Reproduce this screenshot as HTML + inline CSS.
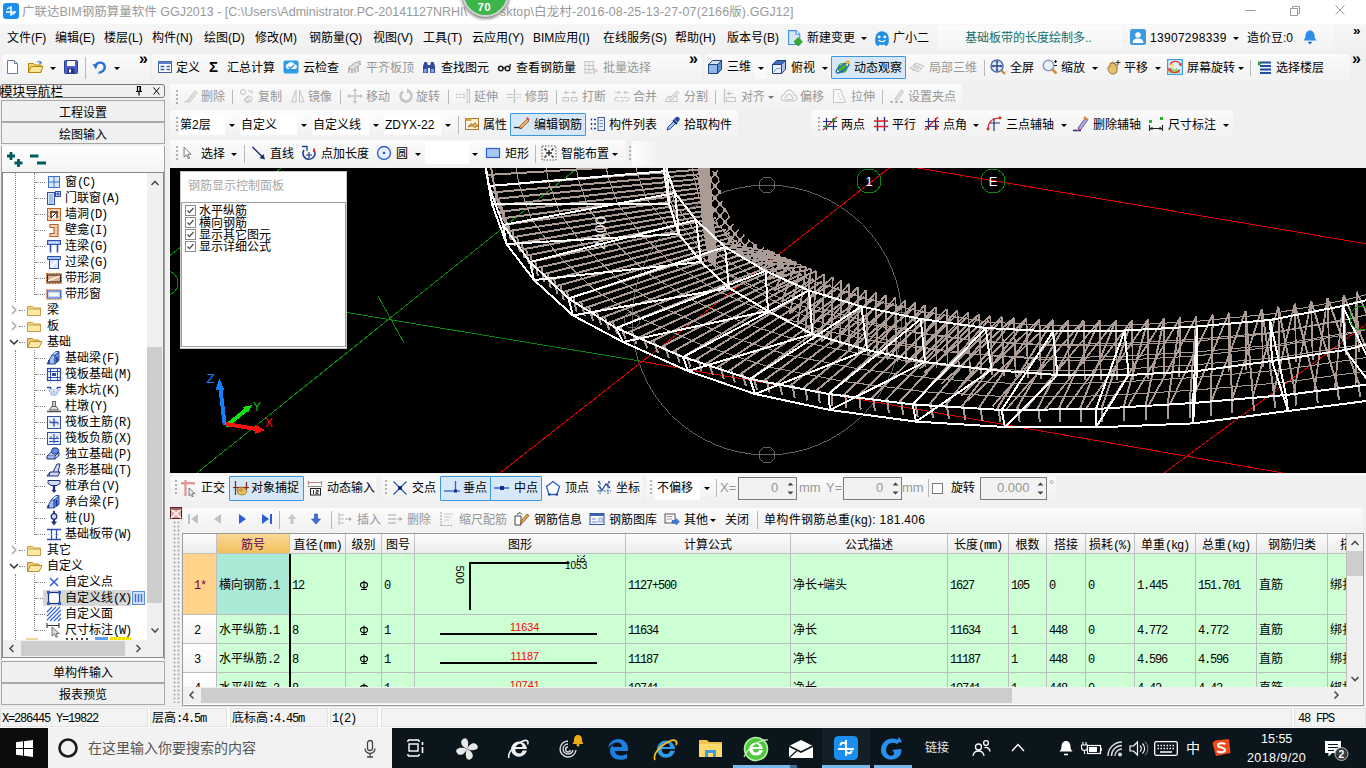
<!DOCTYPE html>
<html lang="zh-CN"><head><meta charset="utf-8"><title>GGJ2013</title>
<style>

html,body{margin:0;padding:0}
body{width:1366px;height:768px;position:relative;overflow:hidden;background:#f0f0f0;
 font-family:"Liberation Sans","Noto Sans CJK SC",sans-serif;font-size:12px;color:#000}
.t{position:absolute;white-space:nowrap;font-size:12px}
.g{color:#979797}
.ss{font-family:"Liberation Mono","Noto Sans CJK SC",monospace;font-size:12px}
.ss b{font-weight:normal;font-family:"Liberation Mono",monospace;letter-spacing:-1.2px}
.i{position:absolute;overflow:visible}
.dd{position:absolute;width:0;height:0;border-left:3px solid transparent;border-right:3px solid transparent;border-top:3px solid #000}
.sep{position:absolute;width:1px;background:#b8b8b8}
.grip{position:absolute;width:2px;background-image:linear-gradient(#b2b2b2 50%,transparent 50%);background-size:2px 4px}
.tb{position:absolute;border-radius:3px;background:linear-gradient(#fbfbfb,#f1f1f1)}
.act{position:absolute;border:1px solid #3c96e0;background:#d6e8f8;box-sizing:border-box;border-radius:1px}
.btn{position:absolute;box-sizing:border-box;border:1px solid #a8a8a8;background:#f0f0f0;text-align:center;font-size:12px}
.cb{position:absolute;background:#fff}

.ttl{color:#999;font-size:12.5px}

</style></head>
<body>
<div class="" style="position:absolute;left:0px;top:0px;width:1366px;height:24px;background:#fff"></div>
<svg class="i" style="left:3px;top:3px" width="16" height="16" viewBox="0 0 16 16"><rect width="16" height="16" rx="3" fill="#1b8ff0"/><path d="M8 3v10M4.500 6.500c0-2 2.500-2 3.500-.500M11.500 9.500c0 2-2.500 2-3.500 .500M3 9h10" fill="none" stroke="#fff" stroke-width="1.300"/></svg>
<span class="t ttl" style="left:22px;top:3px;line-height:18px;">广联达BIM钢筋算量软件 GGJ2013 - [C:\Users\Administrator.PC-20141127NRHI\</span>
<span class="t ttl" style="left:500px;top:3px;line-height:18px;letter-spacing:.120px">sktop\白龙村-2016-08-25-13-27-07(2166版).GGJ12]</span>
<svg class="i" style="left:1240px;top:0" width="126" height="24" viewBox="0 0 126 24"><path d="M5.500 10.500h10" stroke="#999" /><path d="M50.500 8.500h7v7h-7zM52.500 8.500v-2h7v7h-2" fill="none" stroke="#999"/><path d="M95.500 5.500l9 9M104.500 5.500l-9 9" stroke="#999" stroke-width="1"/></svg>
<div style="position:absolute;left:462px;top:-30px;width:47px;height:47px;border-radius:50%;background:#3cb54a;border:2px solid #d4d4d4;box-sizing:border-box;box-shadow:0 1px 3px 1px rgba(80,80,80,.650)"></div>
<span class="t" style="left:477.5px;top:0.8px;line-height:12px;color:#fff;font-weight:bold;font-size:11.500px;letter-spacing:.400px">70</span>
<div class="" style="position:absolute;left:0px;top:24px;width:1366px;height:28px;background:linear-gradient(#f6f6f6,#f0f0f0)"></div>
<span class="t" style="left:7px;top:30px;line-height:16px;">文件(F)</span>
<span class="t" style="left:55px;top:30px;line-height:16px;">编辑(E)</span>
<span class="t" style="left:104px;top:30px;line-height:16px;">楼层(L)</span>
<span class="t" style="left:152px;top:30px;line-height:16px;">构件(N)</span>
<span class="t" style="left:204px;top:30px;line-height:16px;">绘图(D)</span>
<span class="t" style="left:255px;top:30px;line-height:16px;">修改(M)</span>
<span class="t" style="left:309px;top:30px;line-height:16px;">钢筋量(Q)</span>
<span class="t" style="left:373px;top:30px;line-height:16px;">视图(V)</span>
<span class="t" style="left:423px;top:30px;line-height:16px;">工具(T)</span>
<span class="t" style="left:472px;top:30px;line-height:16px;">云应用(Y)</span>
<span class="t" style="left:533px;top:30px;line-height:16px;">BIM应用(I)</span>
<span class="t" style="left:603px;top:30px;line-height:16px;">在线服务(S)</span>
<span class="t" style="left:675px;top:30px;line-height:16px;">帮助(H)</span>
<span class="t" style="left:727px;top:30px;line-height:16px;">版本号(B)</span>
<svg class="i" style="left:787px;top:29px" width="17" height="17" viewBox="0 0 16 16"><path d="M1.500 1.500h7l3.500 3.500v9.500h-10.500z" fill="#d4e8fa" stroke="#3a8ee0"/><path d="M8.500 1.500v3.500h3.500" fill="#fff" stroke="#3a8ee0"/><path d="M10.500 8l4 4-4 4-4-4z" fill="#30b030" stroke="#1f801f" stroke-width=".6"/></svg>
<span class="t" style="left:807px;top:30px;line-height:16px;">新建变更</span>
<span class="dd" style="left:861px;top:37px;border-top-color:#000"></span>
<svg class="i" style="left:873px;top:29px" width="18" height="18" viewBox="0 0 16 16"><path d="M2 8a6 6 0 0 1 12 0v3c0 3-2 4-3 4l-1-1.500-2 1-2-1-1 1.500c-1 0-3-1-3-4z" fill="#1e90e8"/><circle cx="5.500" cy="7" r="1.300" fill="#fff"/><circle cx="10.500" cy="7" r="1.300" fill="#fff"/><path d="M5 10q3 2.500 6 0" stroke="#fff" fill="none" stroke-width="1.200"/></svg>
<span class="t" style="left:893px;top:30px;line-height:16px;">广小二</span>
<div class="" style="position:absolute;left:937px;top:25px;width:186px;height:26px;background:linear-gradient(#fcfcfc,#f4f4f4);border-radius:3px"></div>
<span class="t" style="left:965px;top:30px;line-height:16px;color:#10706c">基础板带的长度绘制多..</span>
<div class="" style="position:absolute;left:1124px;top:25px;width:210px;height:26px;background:linear-gradient(#fafafa,#f2f2f2);border-radius:3px"></div>
<svg class="i" style="left:1130px;top:29px" width="16" height="16" viewBox="0 0 16 16"><rect x="0" y="0" width="16" height="16" rx="2.500" fill="#3b9ae0"/><circle cx="8" cy="6" r="2.800" fill="#fff"/><path d="M2.500 14c.500-4 3-4.500 5.500-4.500s5 .500 5.500 4.500z" fill="#fff"/></svg>
<span class="t" style="left:1150px;top:30px;line-height:16px;letter-spacing:.300px">13907298339</span>
<span class="dd" style="left:1233px;top:37px;border-top-color:#000"></span>
<span class="t" style="left:1247px;top:30px;line-height:16px;">造价豆:0</span>
<svg class="i" style="left:1302px;top:29px" width="16" height="16" viewBox="0 0 16 16"><path d="M8 1.500c3 0 4.500 2.500 4.500 5.500 0 2.500 1.500 3.500 2 4.500H1.500c.500-1 2-2 2-4.500 0-3 1.500-5.500 4.500-5.500z" fill="#2f8be8"/><path d="M5.500 12.800h5l-2.500 2.700z" fill="#1f6fc8"/></svg>
<span class="t" style="left:1353px;top:24.5px;line-height:12px;font-size:13.500px;font-weight:bold">»</span>
<div class="tb" style="position:absolute;left:2px;top:54px;width:148px;height:28px;"></div>
<svg class="i" style="left:5px;top:59px" width="16" height="16" viewBox="0 0 16 16"><path d="M2.5 1.5h7l3 3v10h-10z" fill="#fff" stroke="#6b7a99"/><path d="M9.5 1.5v3h3" fill="#dfe6f5" stroke="#6b7a99"/></svg>
<svg class="i" style="left:27px;top:59px" width="16" height="16" viewBox="0 0 16 16"><path d="M1.5 4.5h5l1.5 1.5h6v7.5h-12.5z" fill="#f5d376" stroke="#b8860b"/><path d="M1.5 13.5l2.5-6h12l-2.5 6z" fill="#fbe59a" stroke="#b8860b"/><path d="M10 3.5c2-2 4-1 4.5 .5" fill="none" stroke="#3a6fc4"/><path d="M13 2l2 2.5-3 .3z" fill="#3a6fc4"/></svg>
<span class="dd" style="left:50px;top:67px;border-top-color:#000"></span>
<svg class="i" style="left:63px;top:59px" width="16" height="16" viewBox="0 0 16 16"><rect x="1.5" y="1.5" width="13" height="13" rx="1" fill="#4a63c8" stroke="#2a3f96"/><rect x="4" y="2" width="8" height="5" fill="#fff"/><rect x="4.5" y="9.5" width="7" height="5" fill="#26347a"/><rect x="6" y="10.5" width="2" height="3" fill="#fff"/></svg>
<span class="sep" style="left:85px;top:57px;height:22px"></span>
<svg class="i" style="left:92px;top:59px" width="16" height="16" viewBox="0 0 16 16"><path d="M3 8c1-5 8-6 9.5-1.5S9 14 6.5 13.5" fill="none" stroke="#2f6fd6" stroke-width="2.4"/><path d="M0.5 5l5.5 .2-2.2 5z" fill="#2f6fd6"/></svg>
<span class="dd" style="left:114px;top:67px;border-top-color:#000"></span>
<span class="t" style="left:139px;top:53px;line-height:12px;font-size:16px;font-weight:bold">»</span>
<div class="tb" style="position:absolute;left:152px;top:54px;width:550px;height:28px;"></div>
<svg class="i" style="left:157px;top:59px" width="16" height="16" viewBox="0 0 16 16"><rect x="1.5" y="2.5" width="13" height="11" fill="#fff" stroke="#3f5f9f"/><rect x="1.5" y="2.5" width="13" height="2.5" fill="#5b7fc7"/><path d="M3.5 7.5h4M3.5 10.5h4M9.5 7.5h3.5M9.5 10.5h3.5" stroke="#3f5f9f" stroke-width="1.4"/></svg>
<span class="t" style="left:176px;top:60px;line-height:16px;">定义</span>
<span class="t" style="left:209px;top:58.5px;line-height:16px;font-size:15px;font-weight:bold">Σ</span>
<span class="t" style="left:227px;top:60px;line-height:16px;">汇总计算</span>
<svg class="i" style="left:283px;top:59px" width="16" height="16" viewBox="0 0 16 16"><rect x="0.5" y="1.5" width="15" height="13" rx="2" fill="#2b9be8"/><path d="M4 9.5a2.5 2.5 0 0 1 1-4.6 3.4 3.4 0 0 1 6.4.6A2.2 2.2 0 0 1 12 10H4.8z" fill="#fff"/><path d="M5.5 7.5l2 2 3.5-3.5" fill="none" stroke="#2b9be8" stroke-width="1.4"/></svg>
<span class="t" style="left:303px;top:60px;line-height:16px;">云检查</span>
<svg class="i" style="left:347px;top:59px" width="16" height="16" viewBox="0 0 16 16"><path d="M1 9l8-6 5 2-8 6z" fill="#ddd" stroke="#aaa"/><path d="M2 10v4M5 11v3.5M8 10v4M11 8v5" stroke="#aaa" stroke-width="1.5"/><path d="M11 2l3 1" stroke="#999"/></svg>
<span class="t g" style="left:366px;top:60px;line-height:16px;">平齐板顶</span>
<svg class="i" style="left:421px;top:59px" width="16" height="16" viewBox="0 0 16 16"><path d="M2 14V7l1.5-4h2.5l1 4v7zM9 14V7l1-4h2.5L14 7v7z" fill="#2d4b9a"/><rect x="6.5" y="6" width="3" height="3" fill="#2d4b9a"/><rect x="2.8" y="10" width="3" height="3.5" fill="#7fa2e8"/><rect x="10" y="10" width="3" height="3.5" fill="#7fa2e8"/></svg>
<span class="t" style="left:441px;top:60px;line-height:16px;">查找图元</span>
<svg class="i" style="left:497px;top:59px" width="16" height="16" viewBox="0 0 16 16"><circle cx="3.8" cy="9.5" r="2.3" fill="none" stroke="#222" stroke-width="1.5"/><circle cx="10.5" cy="9.5" r="2.3" fill="none" stroke="#222" stroke-width="1.5"/><path d="M6 9h2.3M12.5 8.5l1-3.5" stroke="#222" stroke-width="1.3" fill="none"/></svg>
<span class="t" style="left:516px;top:60px;line-height:16px;">查看钢筋量</span>
<svg class="i" style="left:583px;top:59px" width="16" height="16" viewBox="0 0 16 16"><path d="M1.5 2.5h10M1.5 6.5h10M1.5 10.5h10M1.5 14h8M2 2v12M6 2v12M10 2v9" stroke="#c4c4c4" fill="none"/><path d="M10 9l5 3-3 .5-1 2.5z" fill="#ddd" stroke="#bbb" stroke-width=".6"/></svg>
<span class="t g" style="left:603px;top:60px;line-height:16px;">批量选择</span>
<span class="t" style="left:689px;top:53px;line-height:12px;font-size:16px;font-weight:bold">»</span>
<div class="tb" style="position:absolute;left:705px;top:54px;width:645px;height:28px;"></div>
<svg class="i" style="left:707px;top:59px" width="16" height="16" viewBox="0 0 16 16"><path d="M1.5 5.5h9v9h-9z" fill="#8fb8e8" stroke="#1f3f7f"/><path d="M1.5 5.5l4-4h9l-4 4z" fill="#cfe2f8" stroke="#1f3f7f"/><path d="M10.5 5.5l4-4v9l-4 4z" fill="#5e8fd0" stroke="#1f3f7f"/></svg>
<span class="t" style="left:727px;top:59px;line-height:16px;">三维</span>
<div class="" style="position:absolute;left:755px;top:57px;width:11px;height:22px;background:#fafafa"></div>
<span class="dd" style="left:758px;top:67px;border-top-color:#000"></span>
<svg class="i" style="left:771px;top:59px" width="16" height="16" viewBox="0 0 16 16"><path d="M1.5 5.5h9v9h-9z" fill="#e8f0fb" stroke="#1f3f7f"/><path d="M1.5 5.5l4-4h9l-4 4z" fill="#3f6fc0" stroke="#1f3f7f"/><path d="M10.5 5.5l4-4v9l-4 4z" fill="#a9c4ea" stroke="#1f3f7f"/><path d="M3 13l2.5-3.5h4" stroke="#7f9fd0" fill="none"/></svg>
<span class="t" style="left:791px;top:60px;line-height:16px;">俯视</span>
<span class="dd" style="left:822px;top:67px;border-top-color:#000"></span>
<div class="act" style="position:absolute;left:831px;top:56px;width:75px;height:23px;"></div>
<svg class="i" style="left:835px;top:59px" width="16" height="16" viewBox="0 0 16 16"><circle cx="7.5" cy="9" r="5" fill="#3fae3a"/><path d="M5 7.5a3 3 0 0 1 3-2" stroke="#bff0b0" fill="none" stroke-width="1.3"/><ellipse cx="7.5" cy="9" rx="7.5" ry="2.6" transform="rotate(-35 7.5 9)" fill="none" stroke="#2a5fb8" stroke-width="1.3"/><circle cx="13" cy="3" r="2" fill="#f0c020"/></svg>
<span class="t" style="left:854px;top:60px;line-height:16px;">动态观察</span>
<svg class="i" style="left:909px;top:59px" width="16" height="16" viewBox="0 0 16 16"><path d="M1 9l6-5 8 3-6 6z" fill="#eee" stroke="#c4c4c4"/><path d="M4 6.5l8 3M7 4l-3 8M10.5 5.5l-4 6" stroke="#c4c4c4" fill="none"/></svg>
<span class="t g" style="left:929px;top:60px;line-height:16px;">局部三维</span>
<span class="sep" style="left:984px;top:60px;height:16px"></span>
<svg class="i" style="left:990px;top:59px" width="16" height="16" viewBox="0 0 16 16"><circle cx="7" cy="7" r="6" fill="#e6eefc" stroke="#4a68a8" stroke-width="1.4"/><path d="M7 2.5v9M2.5 7h9" stroke="#1f3f8f" stroke-width="1.3"/><path d="M7 1.5l-1.6 2h3.2zM7 12.5l-1.6-2h3.2zM1.5 7l2-1.6v3.2zM12.5 7l-2-1.6v3.2z" fill="#1f3f8f"/><path d="M11.5 11.5l3.5 3.5" stroke="#d08020" stroke-width="2.2"/></svg>
<span class="t" style="left:1010px;top:60px;line-height:16px;">全屏</span>
<svg class="i" style="left:1042px;top:59px" width="16" height="16" viewBox="0 0 16 16"><circle cx="6.5" cy="6.5" r="5.2" fill="#eaf2fd" stroke="#8a9ab8" stroke-width="1.5"/><path d="M10.5 10.5l4 4" stroke="#d09030" stroke-width="2.6"/><path d="M12 2.5h3M13.5 1v3M12 6.5h3" stroke="#222" stroke-width="1.2"/></svg>
<span class="t" style="left:1061px;top:60px;line-height:16px;">缩放</span>
<span class="dd" style="left:1092px;top:67px;border-top-color:#000"></span>
<svg class="i" style="left:1105px;top:59px" width="16" height="16" viewBox="0 0 16 16"><path d="M3 9c0-2 1.5-2 2-1V5c0-1.3 1.8-1.3 1.8 0v-1c0-1.3 1.8-1.3 1.8 0v1c0-1.2 1.8-1.2 1.8 0v1.500c0-1 1.700-1 1.700 0V11c0 3-2 4-4.500 4S3 12.500 3 9z" fill="#e8c070" stroke="#8a6a20" stroke-width=".9"/><path d="M13 1v5M10.5 3.500h5" stroke="#333" stroke-width="1"/></svg>
<span class="t" style="left:1124px;top:60px;line-height:16px;">平移</span>
<span class="dd" style="left:1155px;top:67px;border-top-color:#000"></span>
<svg class="i" style="left:1167px;top:59px" width="16" height="16" viewBox="0 0 16 16"><rect x=".600" y=".600" width="14.800" height="14.800" fill="#e4f2fc" stroke="#3aa0e8" stroke-width="1.200"/><path d="M2 12l3-3.500 2.500 2.500 2-2 4 4v1H2z" fill="#8fd070"/><rect x="3" y="5" width="4" height="3" fill="#f8e080"/><path d="M3 5.500A5.800 5.800 0 0 1 13.500 6M13 10.500A5.800 5.800 0 0 1 2.500 10" fill="none" stroke="#e83828" stroke-width="1.400"/><path d="M15 3.500l-.600 4-3-1.700zM1 12.500l.600-4 3 1.700z" fill="#e83828"/></svg>
<span class="t" style="left:1187px;top:60px;line-height:16px;">屏幕旋转</span>
<span class="dd" style="left:1238px;top:67px;border-top-color:#000"></span>
<span class="sep" style="left:1250px;top:60px;height:16px"></span>
<svg class="i" style="left:1257px;top:59px" width="16" height="16" viewBox="0 0 16 16"><path d="M3 3.500h11M3 7h11M3 10.500h11M3 14h11" stroke="#1f4f9f" stroke-width="1.800"/><path d="M1 2l4 2.500-4 2.500z" fill="#2fa040"/></svg>
<span class="t" style="left:1276px;top:60px;line-height:16px;">选择楼层</span>
<span class="t" style="left:1352px;top:53px;line-height:12px;font-size:16px;font-weight:bold">»</span>
<div class="tb" style="position:absolute;left:170px;top:84px;width:792px;height:25px;"></div>
<span class="grip" style="left:176px;top:90px;height:14px"></span>
<svg class="i" style="left:183px;top:88px" width="16" height="16" viewBox="0 0 16 16"><path d="M5 12l7-9 2 1.500-6.500 9z" fill="#e4e4e4" stroke="#c4c4c4"/><path d="M1 14h5M3 12.500l2.500 1" stroke="#c4c4c4"/></svg>
<span class="t g" style="left:201px;top:89px;line-height:16px;">删除</span>
<svg class="i" style="left:239px;top:88px" width="16" height="16" viewBox="0 0 16 16"><circle cx="4" cy="4" r="2.600" fill="none" stroke="#c4c4c4"/><circle cx="10" cy="11" r="3" fill="none" stroke="#c4c4c4"/><circle cx="8" cy="12" r="2.500" fill="none" stroke="#c4c4c4"/><path d="M9 2l4 3M13 2v3.500" stroke="#c4c4c4" fill="none"/></svg>
<span class="t g" style="left:258px;top:89px;line-height:16px;">复制</span>
<svg class="i" style="left:290px;top:88px" width="16" height="16" viewBox="0 0 16 16"><path d="M6 2v12H1.500zM9.500 2v12H14z" fill="#f4f4f4" stroke="#c4c4c4"/></svg>
<span class="t g" style="left:308px;top:89px;line-height:16px;">镜像</span>
<svg class="i" style="left:347px;top:88px" width="16" height="16" viewBox="0 0 16 16"><path d="M8 1v14M1 8h14" stroke="#c4c4c4" stroke-width="1.300"/><path d="M8 0l-2.200 3h4.400zM8 16l-2.200-3h4.400zM0 8l3-2.200v4.400zM16 8l-3-2.200v4.400z" fill="#c4c4c4"/></svg>
<span class="t g" style="left:366px;top:89px;line-height:16px;">移动</span>
<svg class="i" style="left:398px;top:88px" width="16" height="16" viewBox="0 0 16 16"><path d="M5 3.500A5.500 5.500 0 1 0 11 3.500" fill="none" stroke="#c4c4c4" stroke-width="2.600"/><path d="M9 .500l4 2.500-4 2.500z" fill="#c4c4c4"/></svg>
<span class="t g" style="left:416px;top:89px;line-height:16px;">旋转</span>
<svg class="i" style="left:455px;top:88px" width="16" height="16" viewBox="0 0 16 16"><path d="M1 6.500h7M1 9.500h7" stroke="#c4c4c4" stroke-dasharray="2 1"/><path d="M9 5v6" stroke="#c4c4c4"/><rect x="12" y="1.500" width="2.500" height="13" fill="#f4f4f4" stroke="#c4c4c4"/></svg>
<span class="t g" style="left:474px;top:89px;line-height:16px;">延伸</span>
<svg class="i" style="left:506px;top:88px" width="16" height="16" viewBox="0 0 16 16"><path d="M1 6.500h6M1 9.500h6" stroke="#c4c4c4"/><path d="M8.500 1v14" stroke="#c4c4c4" stroke-width="1.400"/><path d="M11 6.500h4M11 9.500h4" stroke="#c4c4c4" stroke-dasharray="1.500 1"/></svg>
<span class="t g" style="left:525px;top:89px;line-height:16px;">修剪</span>
<svg class="i" style="left:562px;top:88px" width="16" height="16" viewBox="0 0 16 16"><rect x="1" y="9.500" width="5.500" height="3.500" fill="#f4f4f4" stroke="#c4c4c4"/><rect x="9.500" y="9.500" width="5.500" height="3.500" fill="#f4f4f4" stroke="#c4c4c4"/><path d="M2 4.500h5M14 4.500H9" stroke="#c4c4c4"/><path d="M2 4.500l2.500-2v4zM14 4.500l-2.500-2v4z" fill="#c4c4c4"/></svg>
<span class="t g" style="left:582px;top:89px;line-height:16px;">打断</span>
<svg class="i" style="left:614px;top:88px" width="16" height="16" viewBox="0 0 16 16"><rect x="1" y="9.500" width="14" height="3.500" fill="#f4f4f4" stroke="#c4c4c4" stroke-dasharray="3 1.500"/><path d="M1 4.500h5M15 4.500h-5" stroke="#c4c4c4"/><path d="M7 4.500l-2.500-2v4zM9 4.500l2.500-2v4z" fill="#c4c4c4"/></svg>
<span class="t g" style="left:633px;top:89px;line-height:16px;">合并</span>
<svg class="i" style="left:664px;top:88px" width="16" height="16" viewBox="0 0 16 16"><path d="M1 13.500h12v-5H4z" fill="#f4f4f4" stroke="#c4c4c4"/><path d="M5 11l8-8 2 1.500-7.500 8z" fill="#e8e8e8" stroke="#c4c4c4"/></svg>
<span class="t g" style="left:684px;top:89px;line-height:16px;">分割</span>
<svg class="i" style="left:722px;top:88px" width="16" height="16" viewBox="0 0 16 16"><path d="M2.500 1v14" stroke="#c4c4c4" stroke-width="1.400"/><rect x="4.500" y="9.500" width="9" height="4" fill="#f4f4f4" stroke="#c4c4c4"/><path d="M5 5.500h6" stroke="#c4c4c4"/><path d="M4.500 5.500l3-2.200v4.400z" fill="#c4c4c4"/></svg>
<span class="t g" style="left:741px;top:89px;line-height:16px;">对齐</span>
<svg class="i" style="left:781px;top:88px" width="16" height="16" viewBox="0 0 16 16"><path d="M3 13a3 3 0 0 1 0-6 5 5 0 0 1 10 0 3 3 0 0 1 0 6z" fill="#f4f4f4" stroke="#c4c4c4"/><path d="M5.500 11.500a1.500 1.500 0 0 1 0-3 2.500 2.500 0 0 1 5 0 1.500 1.500 0 0 1 0 3z" fill="none" stroke="#c4c4c4"/></svg>
<span class="t g" style="left:800px;top:89px;line-height:16px;">偏移</span>
<svg class="i" style="left:832px;top:88px" width="16" height="16" viewBox="0 0 16 16"><path d="M1.500 1.500h7l5 13h-12z" fill="#f8f8f8" stroke="#c4c4c4"/><path d="M6 5l3 8" stroke="#c4c4c4" stroke-dasharray="1.500 1.500"/></svg>
<span class="t g" style="left:851px;top:89px;line-height:16px;">拉伸</span>
<svg class="i" style="left:889px;top:88px" width="16" height="16" viewBox="0 0 16 16"><path d="M6 11l6.500-9 2 1.500-6.500 9z" fill="#e4e4e4" stroke="#c4c4c4"/><path d="M1 14h3M6 14h3M11 14h3" stroke="#aaa" stroke-width="1.500"/></svg>
<span class="t g" style="left:908px;top:89px;line-height:16px;">设置夹点</span>
<span class="sep" style="left:232px;top:90px;height:14px"></span>
<span class="sep" style="left:340px;top:90px;height:14px"></span>
<span class="sep" style="left:448px;top:90px;height:14px"></span>
<span class="sep" style="left:556px;top:90px;height:14px"></span>
<span class="sep" style="left:715px;top:90px;height:14px"></span>
<span class="sep" style="left:882px;top:90px;height:14px"></span>
<span class="dd" style="left:768px;top:96px;border-top-color:#777"></span>
<div class="tb" style="position:absolute;left:170px;top:110px;width:568px;height:28px;"></div>
<span class="grip" style="left:176px;top:117px;height:16px"></span>
<div class="cb" style="position:absolute;left:179px;top:113px;width:46px;height:22px;"></div>
<div class="" style="position:absolute;left:225px;top:113px;width:13px;height:22px;background:linear-gradient(#fdfdfd,#f0f0f0)"></div>
<span class="t" style="left:180px;top:117px;line-height:16px;">第2层</span>
<span class="dd" style="left:229px;top:124px;border-top-color:#000"></span>
<div class="cb" style="position:absolute;left:240px;top:113px;width:57px;height:22px;"></div>
<div class="" style="position:absolute;left:297px;top:113px;width:13px;height:22px;background:linear-gradient(#fdfdfd,#f0f0f0)"></div>
<span class="t" style="left:241px;top:117px;line-height:16px;">自定义</span>
<span class="dd" style="left:301px;top:124px;border-top-color:#000"></span>
<div class="cb" style="position:absolute;left:312px;top:113px;width:57px;height:22px;"></div>
<div class="" style="position:absolute;left:369px;top:113px;width:13px;height:22px;background:linear-gradient(#fdfdfd,#f0f0f0)"></div>
<span class="t" style="left:313px;top:117px;line-height:16px;">自定义线</span>
<span class="dd" style="left:373px;top:124px;border-top-color:#000"></span>
<div class="cb" style="position:absolute;left:384px;top:113px;width:57px;height:22px;"></div>
<div class="" style="position:absolute;left:441px;top:113px;width:13px;height:22px;background:linear-gradient(#fdfdfd,#f0f0f0)"></div>
<span class="t" style="left:385px;top:117px;line-height:16px;">ZDYX-22</span>
<span class="dd" style="left:445px;top:124px;border-top-color:#000"></span>
<span class="sep" style="left:458px;top:116px;height:18px"></span>
<svg class="i" style="left:464px;top:116px" width="16" height="16" viewBox="0 0 16 16"><rect x="1.500" y="2.500" width="13" height="11" fill="#fdf6e0" stroke="#b07828"/><rect x="1.500" y="2.500" width="6" height="2.500" fill="#e0a040"/><path d="M4 11l3-3.500 2 1.500 2-2.500 3 3.500-3 1.500-3-1.500z" fill="#e8b050" stroke="#8a5a10" stroke-width=".700"/></svg>
<span class="t" style="left:483px;top:117px;line-height:16px;">属性</span>
<div class="act" style="position:absolute;left:510px;top:113px;width:76px;height:23px;"></div>
<svg class="i" style="left:514px;top:116px" width="16" height="16" viewBox="0 0 16 16"><path d="M0 11.500h6" stroke="#222" stroke-width="1.300"/><path d="M5 11.500l3 1.500" stroke="#222"/><path d="M6 10l7-7 2 2-7 7-2.500.500z" fill="#f0b060" stroke="#8a5a20" stroke-width=".800"/><path d="M12 2l2.500 2.500 1-1.500-2-2z" fill="#e05050"/></svg>
<span class="t" style="left:534px;top:117px;line-height:16px;">编辑钢筋</span>
<svg class="i" style="left:590px;top:116px" width="16" height="16" viewBox="0 0 16 16"><path d="M1.500 2.500v2M1.500 7v2M1.500 11.500v2M4 3.500h2M4 8h2M4 12.500h2" stroke="#1f3f7f" stroke-width="1.400"/><rect x="8" y="1.500" width="6.500" height="13" fill="#eaf1fb" stroke="#3f5f9f"/><path d="M9.500 4.500h3.500M9.500 7.500h3.500M9.500 10.500h3.500" stroke="#6f8fc0"/></svg>
<span class="t" style="left:609px;top:117px;line-height:16px;">构件列表</span>
<svg class="i" style="left:665px;top:116px" width="16" height="16" viewBox="0 0 16 16"><path d="M2 14l1-3 6-6 2 2-6 6z" fill="#9fc4f0" stroke="#1f4fa0"/><path d="M9 3l1.500-1.500c1-1 2.500-1 3.500 0s1 2.500 0 3.500L12.500 6.500z" fill="#1f4fa0"/><path d="M8 4l4 4" stroke="#0f2f70" stroke-width="1.800"/></svg>
<span class="t" style="left:684px;top:117px;line-height:16px;">拾取构件</span>
<div class="tb" style="position:absolute;left:811px;top:110px;width:422px;height:28px;"></div>
<span class="grip" style="left:818px;top:117px;height:16px"></span>
<svg class="i" style="left:822px;top:116px" width="16" height="16" viewBox="0 0 16 16"><path d="M4.500 2v12M11.500 2v12M1 5.500h14M1 10.500h14" stroke="#1f2f7f" stroke-width="1.200"/><path d="M1 14L15 1" stroke="#e02020" stroke-width="1.200"/><circle cx="4.500" cy="10.500" r="1.500" fill="#20a020"/><circle cx="11.500" cy="4" r="1.500" fill="#20a020"/></svg>
<span class="t" style="left:841px;top:117px;line-height:16px;">两点</span>
<svg class="i" style="left:873px;top:116px" width="16" height="16" viewBox="0 0 16 16"><path d="M4.500 1v14M11.500 1v14" stroke="#1f2f7f" stroke-width="1.300"/><path d="M1 5h14M1 10.500h14" stroke="#e02020" stroke-width="1.300"/></svg>
<span class="t" style="left:892px;top:117px;line-height:16px;">平行</span>
<svg class="i" style="left:924px;top:116px" width="16" height="16" viewBox="0 0 16 16"><path d="M4.500 2v12M11.500 2v12M1 5.500h14M1 10.500h14" stroke="#1f2f7f" stroke-width="1.200"/><path d="M1 14L14 1" stroke="#e02020" stroke-width="1.200"/><path d="M12 8.500a3 3 0 0 1 0 5" stroke="#e02020" fill="none" stroke-width="1.300"/></svg>
<span class="t" style="left:943px;top:117px;line-height:16px;">点角</span>
<span class="dd" style="left:973px;top:124px;border-top-color:#000"></span>
<svg class="i" style="left:986px;top:116px" width="16" height="16" viewBox="0 0 16 16"><path d="M8 2v13M3 7h11" stroke="#1f2f7f" stroke-width="1.200"/><path d="M2 13C2 6 6 2 14 2" fill="none" stroke="#e02020" stroke-width="1.200"/><circle cx="2" cy="13" r="1.400" fill="#e02020"/><circle cx="14" cy="2" r="1.400" fill="#e02020"/></svg>
<span class="t" style="left:1006px;top:117px;line-height:16px;">三点辅轴</span>
<span class="dd" style="left:1061px;top:124px;border-top-color:#000"></span>
<svg class="i" style="left:1073px;top:116px" width="16" height="16" viewBox="0 0 16 16"><path d="M0 14.500h8" stroke="#1f2f7f" stroke-width="1.500"/><path d="M5 12l7-9.500 2.500 1.800-7 9.500z" fill="#b8a8e0" stroke="#3f3f9f" stroke-width=".800"/><path d="M11 1l4 3" stroke="#e08020" stroke-width="2"/><path d="M5 12l-1 3 3.500-1.200z" fill="#e05080"/></svg>
<span class="t" style="left:1093px;top:117px;line-height:16px;">删除辅轴</span>
<svg class="i" style="left:1148px;top:116px" width="16" height="16" viewBox="0 0 16 16"><path d="M1.500 9v6M14.500 9v6M1.500 12.500h13" stroke="#222" stroke-width="1.100"/><path d="M1.500 12.500l3-1.800v3.600zM14.500 12.500l-3-1.800v3.600z" fill="#222"/><rect x="1" y="4" width="3" height="3" fill="#30b030"/><rect x="12" y="1" width="3" height="3" fill="#30b030"/></svg>
<span class="t" style="left:1168px;top:117px;line-height:16px;">尺寸标注</span>
<span class="dd" style="left:1223px;top:124px;border-top-color:#000"></span>
<div class="tb" style="position:absolute;left:170px;top:140px;width:456px;height:27px;"></div>
<span class="grip" style="left:176px;top:146px;height:16px"></span>
<svg class="i" style="left:181px;top:146px" width="14" height="14" viewBox="0 0 16 16"><path d="M3.500 1.500v11l2.800-2.500 2 4.500 1.500-.700-2-4.300h3.700z" fill="#fff" stroke="#555" stroke-width=".900"/></svg>
<span class="t" style="left:201px;top:146px;line-height:16px;">选择</span>
<span class="dd" style="left:231px;top:153px;border-top-color:#000"></span>
<span class="sep" style="left:244px;top:145px;height:18px"></span>
<svg class="i" style="left:251px;top:145px" width="16" height="16" viewBox="0 0 16 16"><path d="M1.500 2l11 11" stroke="#1f2f6f" stroke-width="1.500"/><path d="M14 14.500l-5.500-1.500 4-4z" fill="#1f2f6f"/></svg>
<span class="t" style="left:270px;top:146px;line-height:16px;">直线</span>
<svg class="i" style="left:301px;top:145px" width="16" height="16" viewBox="0 0 16 16"><path d="M3 5a6 6 0 1 0 10.500 1" fill="none" stroke="#1f3f8f" stroke-width="1.500"/><path d="M1 1.500h5v4.500" fill="none" stroke="#1f3f8f" stroke-width="1.300"/><path d="M8 7v6M5 10h6" stroke="#1f3f8f" stroke-width="1.200"/><path d="M13 3.500v3.500" stroke="#e02020" stroke-width="1.800"/></svg>
<span class="t" style="left:321px;top:146px;line-height:16px;">点加长度</span>
<svg class="i" style="left:376px;top:145px" width="16" height="16" viewBox="0 0 16 16"><circle cx="8" cy="8" r="6.500" fill="#e6f0fe" stroke="#2f5fd0" stroke-width="1.400"/><circle cx="8" cy="8" r="1.300" fill="#2f5fd0"/></svg>
<span class="t" style="left:396px;top:146px;line-height:16px;">圆</span>
<span class="dd" style="left:415px;top:153px;border-top-color:#000"></span>
<div class="cb" style="position:absolute;left:425px;top:142px;width:44px;height:22px;"></div>
<div class="" style="position:absolute;left:469px;top:142px;width:13px;height:22px;background:linear-gradient(#fdfdfd,#f0f0f0)"></div>
<span class="dd" style="left:472px;top:153px;border-top-color:#000"></span>
<svg class="i" style="left:485px;top:145px" width="16" height="16" viewBox="0 0 16 16"><rect x="1.500" y="3.500" width="13" height="9" fill="#a8c8f4" stroke="#2f5fd0" stroke-width="1.200"/></svg>
<span class="t" style="left:505px;top:146px;line-height:16px;">矩形</span>
<span class="sep" style="left:535px;top:145px;height:18px"></span>
<svg class="i" style="left:541px;top:145px" width="16" height="16" viewBox="0 0 16 16"><rect x="1" y="1" width="14" height="14" fill="#f8f8f8" stroke="#555" stroke-dasharray="1.500 1.500"/><path d="M8 5v6M5 8h6" stroke="#222" stroke-width="1.300"/><path d="M3.500 3.500l2 2M12.500 3.500l-2 2M3.500 12.500l2-2M12.500 12.500l-2-2" stroke="#222" stroke-width="1.300"/></svg>
<span class="t" style="left:561px;top:146px;line-height:16px;">智能布置</span>
<span class="dd" style="left:612px;top:153px;border-top-color:#000"></span>
<span class="grip" style="left:629px;top:146px;height:16px"></span>
<div class="" style="position:absolute;left:632px;top:141px;width:24px;height:25px;background:linear-gradient(90deg,#fdfdfd,#f2f2f2)"></div>
<div class="" style="position:absolute;left:0px;top:84px;width:165px;height:14px;border:1px solid #7a7a7a;border-radius:3px;box-sizing:border-box;background:#f0f0f0"></div>
<span class="t ss" style="left:0px;top:85.5px;line-height:14px;font-size:12.600px">模块导航栏</span>
<svg class="i" style="left:134px;top:85px" width="28" height="12" viewBox="0 0 28 12"><path d="M2 6.500h6M3.500 1.500h3v5h-3zM6 1.500v5M5 6.500v4" fill="none" stroke="#000" stroke-width="1.200"/><path d="M19.500 2.500l6 7M25.500 2.500l-6 7" stroke="#000" stroke-width="1"/></svg>
<div class="btn ss" style="left:1px;top:100px;width:164px;height:22px;line-height:22px;padding-top:1.500px">工程设置</div>
<div class="btn ss" style="left:1px;top:122px;width:164px;height:22px;line-height:22px;padding-top:1.500px">绘图输入</div>
<div class="" style="position:absolute;left:1px;top:146px;width:164px;height:514px;background:linear-gradient(#fff 0,#f4f4f4 26px,#fff 27px);border-left:1px solid #a0a0a0;border-right:1px solid #a0a0a0;box-sizing:border-box"></div>
<svg class="i" style="left:6px;top:151px" width="42" height="17" viewBox="0 0 42 17"><path d="M5 1v8M1 5h8M12.500 8v8M8.500 12h8" stroke="#005c5c" stroke-width="2.800"/><path d="M24 5h8.500M31 12h9" stroke="#005c5c" stroke-width="2.800"/></svg>
<div class="" style="position:absolute;left:2px;top:172px;width:162px;height:486px;background:#fff;border:1px solid #828790;box-sizing:border-box"></div>
<div class="" style="position:absolute;left:15px;top:173px;width:0px;height:129px;border-left:1px dotted #808080"></div>
<div class="" style="position:absolute;left:15px;top:350px;width:0px;height:194px;border-left:1px dotted #808080"></div>
<div class="" style="position:absolute;left:15px;top:574px;width:0px;height:66px;border-left:1px dotted #808080"></div>
<div class="" style="position:absolute;left:34px;top:173px;width:0px;height:122px;border-left:1px dotted #808080"></div>
<div class="" style="position:absolute;left:34px;top:350px;width:0px;height:185px;border-left:1px dotted #808080"></div>
<div class="" style="position:absolute;left:34px;top:574px;width:0px;height:57px;border-left:1px dotted #808080"></div>
<div class="" style="position:absolute;left:35px;top:182px;width:10px;height:0px;border-top:1px dotted #808080"></div>
<svg class="i" style="left:46px;top:174px" width="16" height="16" viewBox="0 0 16 16"><rect x="2.500" y="2.500" width="11" height="11" fill="#dbe8fb" stroke="#3f6fd0"/><path d="M8 2.500v11M2.500 8h11" stroke="#3f6fd0"/></svg>
<span class="t ss" style="left:65px;top:175px;line-height:16px;">窗<b>(C)</b></span>
<div class="" style="position:absolute;left:35px;top:198px;width:10px;height:0px;border-top:1px dotted #808080"></div>
<svg class="i" style="left:46px;top:190px" width="16" height="16" viewBox="0 0 16 16"><rect x="1.500" y="2.500" width="7" height="12" fill="#dbe8fb" stroke="#2f4fb0"/><rect x="9.500" y="1.500" width="5" height="5" fill="#dbe8fb" stroke="#2f4fb0"/><path d="M12 1.500v5M9.500 4h5" stroke="#2f4fb0"/><rect x="3" y="4" width="4" height="10" fill="#9fc0f0"/></svg>
<span class="t ss" style="left:65px;top:191px;line-height:16px;">门联窗<b>(A)</b></span>
<div class="" style="position:absolute;left:35px;top:214px;width:10px;height:0px;border-top:1px dotted #808080"></div>
<svg class="i" style="left:46px;top:206px" width="16" height="16" viewBox="0 0 16 16"><rect x="1.500" y="2.500" width="13" height="12" fill="#f6d8c0" stroke="#c06020"/><path d="M1.500 6.500h13M1.500 10.500h13M5 2.500v12M11 2.500v12" stroke="#e09060" stroke-width=".600"/><path d="M5 12V6h6v6" fill="#fff" stroke="#402010" stroke-width="1.300"/><path d="M5 12l6-6" stroke="#402010"/></svg>
<span class="t ss" style="left:65px;top:207px;line-height:16px;">墙洞<b>(D)</b></span>
<div class="" style="position:absolute;left:35px;top:230px;width:10px;height:0px;border-top:1px dotted #808080"></div>
<svg class="i" style="left:46px;top:222px" width="16" height="16" viewBox="0 0 16 16"><path d="M4 2.500h8v12H4v-3h4v-6H4z" fill="#f6d8c0" stroke="#c06020" stroke-width="1.200"/><path d="M8 5.500h4M8 8.500h4M8 11.500h4" stroke="#e09060" stroke-width=".700"/></svg>
<span class="t ss" style="left:65px;top:223px;line-height:16px;">壁龛<b>(I)</b></span>
<div class="" style="position:absolute;left:35px;top:246px;width:10px;height:0px;border-top:1px dotted #808080"></div>
<svg class="i" style="left:46px;top:238px" width="16" height="16" viewBox="0 0 16 16"><rect x="1.500" y="2.500" width="13" height="4" fill="#9fc0f0" stroke="#2f4fb0"/><path d="M4.500 6.500v8M11.500 6.500v8" stroke="#2f4fb0" stroke-width="1.600"/><path d="M4 4.500h8" stroke="#fff" stroke-dasharray="1.500 1.500"/></svg>
<span class="t ss" style="left:65px;top:239px;line-height:16px;">连梁<b>(G)</b></span>
<div class="" style="position:absolute;left:35px;top:262px;width:10px;height:0px;border-top:1px dotted #808080"></div>
<svg class="i" style="left:46px;top:254px" width="16" height="16" viewBox="0 0 16 16"><path d="M1.500 2.500h13v3h-13z" fill="#9fc0f0" stroke="#2f4fb0"/><rect x="3.500" y="5.500" width="9" height="9" fill="#dbe8fb" stroke="#2f4fb0"/><path d="M5 13l5-6" stroke="#fff" stroke-width="1.500"/></svg>
<span class="t ss" style="left:65px;top:255px;line-height:16px;">过梁<b>(G)</b></span>
<div class="" style="position:absolute;left:35px;top:278px;width:10px;height:0px;border-top:1px dotted #808080"></div>
<svg class="i" style="left:46px;top:270px" width="16" height="16" viewBox="0 0 16 16"><rect x="0.500" y="3.500" width="15" height="10" fill="#f6d8c0" stroke="#c06020" stroke-dasharray="2 1"/><rect x="1.500" y="5" width="13" height="7" fill="#e0b898" stroke="#402010" stroke-width="1.200"/><path d="M2 11l12-5" stroke="#fff" stroke-width="1.200"/></svg>
<span class="t ss" style="left:65px;top:271px;line-height:16px;">带形洞</span>
<div class="" style="position:absolute;left:35px;top:294px;width:10px;height:0px;border-top:1px dotted #808080"></div>
<svg class="i" style="left:46px;top:286px" width="16" height="16" viewBox="0 0 16 16"><rect x="0.500" y="3.500" width="15" height="10" fill="#f6d8c0" stroke="#e09070" stroke-dasharray="2 1"/><rect x="1.500" y="5" width="13" height="7" fill="#e8f0fd" stroke="#3f6fd0" stroke-width="1.200"/><rect x="3" y="6.500" width="10" height="4" fill="#fff" stroke="#9fb8e8" stroke-width=".600"/></svg>
<span class="t ss" style="left:65px;top:287px;line-height:16px;">带形窗</span>
<div class="" style="position:absolute;left:19px;top:310px;width:6px;height:0px;border-top:1px dotted #808080"></div>
<svg class="i" style="left:10px;top:305px" width="8" height="10" viewBox="0 0 8 10"><path d="M2 1l4 4-4 4" fill="none" stroke="#a0a0a0" stroke-width="1.300"/></svg>
<svg class="i" style="left:26px;top:302px" width="16" height="16" viewBox="0 0 16 16"><path d="M1.500 4.500h5l1.500 1.500h6.500v7.500h-13z" fill="#f7dc8a" stroke="#c8a040"/><path d="M1.500 7h13v6.500h-13z" fill="#fbe9a8" stroke="#c8a040"/></svg>
<span class="t ss" style="left:47px;top:303px;line-height:16px;">梁</span>
<div class="" style="position:absolute;left:19px;top:326px;width:6px;height:0px;border-top:1px dotted #808080"></div>
<svg class="i" style="left:10px;top:321px" width="8" height="10" viewBox="0 0 8 10"><path d="M2 1l4 4-4 4" fill="none" stroke="#a0a0a0" stroke-width="1.300"/></svg>
<svg class="i" style="left:26px;top:318px" width="16" height="16" viewBox="0 0 16 16"><path d="M1.500 4.500h5l1.500 1.500h6.500v7.500h-13z" fill="#f7dc8a" stroke="#c8a040"/><path d="M1.500 7h13v6.500h-13z" fill="#fbe9a8" stroke="#c8a040"/></svg>
<span class="t ss" style="left:47px;top:319px;line-height:16px;">板</span>
<div class="" style="position:absolute;left:19px;top:342px;width:6px;height:0px;border-top:1px dotted #808080"></div>
<svg class="i" style="left:9px;top:338px" width="10" height="8" viewBox="0 0 10 8"><path d="M1 2l4 4 4-4" fill="none" stroke="#303030" stroke-width="1.500"/></svg>
<svg class="i" style="left:26px;top:334px" width="16" height="16" viewBox="0 0 16 16"><path d="M1.500 4.500h5l1.500 1.500h5v7.500h-11.500z" fill="#f0cc70" stroke="#b89030"/><path d="M1.500 13.500l3-6h11.500l-3 6z" fill="#fbe9a8" stroke="#b89030"/></svg>
<span class="t ss" style="left:47px;top:335px;line-height:16px;">基础</span>
<div class="" style="position:absolute;left:35px;top:358px;width:10px;height:0px;border-top:1px dotted #808080"></div>
<svg class="i" style="left:46px;top:350px" width="16" height="16" viewBox="0 0 16 16"><path d="M1 14l5-9 3 0 0 9z" fill="#9fc0f0" stroke="#2f4fb0"/><path d="M9 14V5l4-3.500v9z" fill="#5f8fe0" stroke="#2f4fb0"/><path d="M6 5l4-3.500h3" fill="none" stroke="#2f4fb0"/><path d="M3 14v-4M11 12V7" stroke="#1f2f7f" stroke-width="1.500"/></svg>
<span class="t ss" style="left:65px;top:351px;line-height:16px;">基础梁<b>(F)</b></span>
<div class="" style="position:absolute;left:35px;top:374px;width:10px;height:0px;border-top:1px dotted #808080"></div>
<svg class="i" style="left:46px;top:366px" width="16" height="16" viewBox="0 0 16 16"><rect x="1.500" y="2.500" width="13" height="12" fill="#fff" stroke="#2f4fb0" stroke-width="1.300"/><path d="M1.500 5.500h13M1.500 11.500h13M4.500 2.500v12M11.500 2.500v12" stroke="#2f4fb0"/><rect x="6" y="7" width="4" height="3" fill="#2f4fb0"/></svg>
<span class="t ss" style="left:65px;top:367px;line-height:16px;">筏板基础<b>(M)</b></span>
<div class="" style="position:absolute;left:35px;top:390px;width:10px;height:0px;border-top:1px dotted #808080"></div>
<svg class="i" style="left:46px;top:382px" width="16" height="16" viewBox="0 0 16 16"><path d="M1 5.500h3.500l1.500 6h4l1.500-6H15" fill="none" stroke="#2f4fb0" stroke-width="1.400"/><path d="M2 7l3 7h6l3-7" fill="#cfdcf4" stroke="none"/><path d="M3 9l1 .1M5 12l1 .1M8 13l1 0M10.500 11l1 .1M12.500 8.500l1 0M7 10l1 0" stroke="#5f7fc0" stroke-width="1.200"/></svg>
<span class="t ss" style="left:65px;top:383px;line-height:16px;">集水坑<b>(K)</b></span>
<div class="" style="position:absolute;left:35px;top:406px;width:10px;height:0px;border-top:1px dotted #808080"></div>
<svg class="i" style="left:46px;top:398px" width="16" height="16" viewBox="0 0 16 16"><path d="M1 13.500h14" stroke="#555" stroke-width="1.600"/><path d="M3.500 12l2-3.500h5l2 3.500z" fill="#ddd" stroke="#666"/><rect x="6.500" y="3.500" width="3" height="5" fill="#cfcfcf" stroke="#666"/></svg>
<span class="t ss" style="left:65px;top:399px;line-height:16px;">柱墩<b>(Y)</b></span>
<div class="" style="position:absolute;left:35px;top:422px;width:10px;height:0px;border-top:1px dotted #808080"></div>
<svg class="i" style="left:46px;top:414px" width="16" height="16" viewBox="0 0 16 16"><rect x="1.500" y="2.500" width="13" height="12" fill="#eaf1fd" stroke="#2f4fb0"/><path d="M4 8.500h8M8 4.500v8" stroke="#2f4fb0" stroke-width="1.400"/><path d="M4 6.500v2M12 8.500v2" stroke="#2f4fb0"/></svg>
<span class="t ss" style="left:65px;top:415px;line-height:16px;">筏板主筋<b>(R)</b></span>
<div class="" style="position:absolute;left:35px;top:438px;width:10px;height:0px;border-top:1px dotted #808080"></div>
<svg class="i" style="left:46px;top:430px" width="16" height="16" viewBox="0 0 16 16"><rect x="1.500" y="2.500" width="13" height="12" fill="#eaf1fd" stroke="#2f4fb0"/><path d="M3 8.500h10M8 4v9M3 11.500h10" stroke="#2f4fb0" stroke-width="1.200"/><path d="M5 6v2.500M11 6v2.500" stroke="#2f4fb0"/></svg>
<span class="t ss" style="left:65px;top:431px;line-height:16px;">筏板负筋<b>(X)</b></span>
<div class="" style="position:absolute;left:35px;top:454px;width:10px;height:0px;border-top:1px dotted #808080"></div>
<svg class="i" style="left:46px;top:446px" width="16" height="16" viewBox="0 0 16 16"><path d="M1 10l4-3.500h8l-4 3.500z" fill="#cfdcf4" stroke="#1f2f7f"/><path d="M1 10v3h8v-3M9 13l4-3.500V6.500" fill="#9fb8e8" stroke="#1f2f7f"/><path d="M5 6l2-4h4l2 2.500-2 3.500H7z" fill="#5f8fe0" stroke="#1f2f7f"/></svg>
<span class="t ss" style="left:65px;top:447px;line-height:16px;">独立基础<b>(P)</b></span>
<div class="" style="position:absolute;left:35px;top:470px;width:10px;height:0px;border-top:1px dotted #808080"></div>
<svg class="i" style="left:46px;top:462px" width="16" height="16" viewBox="0 0 16 16"><path d="M1 14l3-4h3l4-8h3l-2 8 2 0-2 4z" fill="#cfdcf4" stroke="#1f2f7f"/><path d="M7 10l6 0M4 10l-1 4" stroke="#1f2f7f" fill="none"/></svg>
<span class="t ss" style="left:65px;top:463px;line-height:16px;">条形基础<b>(T)</b></span>
<div class="" style="position:absolute;left:35px;top:486px;width:10px;height:0px;border-top:1px dotted #808080"></div>
<svg class="i" style="left:46px;top:478px" width="16" height="16" viewBox="0 0 16 16"><path d="M2 2.500h12v3l-3 2H5l-3-2z" fill="#cfdcf4" stroke="#1f2f7f"/><path d="M8 7.500v5" stroke="#1f2f7f" stroke-width="2.400"/><path d="M5.500 12h5L8 15z" fill="#1f2f7f"/></svg>
<span class="t ss" style="left:65px;top:479px;line-height:16px;">桩承台<b>(V)</b></span>
<div class="" style="position:absolute;left:35px;top:502px;width:10px;height:0px;border-top:1px dotted #808080"></div>
<svg class="i" style="left:46px;top:494px" width="16" height="16" viewBox="0 0 16 16"><path d="M1 14l4-8 3 0 0 8z" fill="#9fc0f0" stroke="#2f4fb0"/><path d="M8 14V6l5-4.500v9z" fill="#5f8fe0" stroke="#2f4fb0"/><path d="M5 6l5-4.500h3" fill="none" stroke="#2f4fb0"/><path d="M2.500 14v-3M10.500 12V6" stroke="#1f2f7f" stroke-width="1.600"/></svg>
<span class="t ss" style="left:65px;top:495px;line-height:16px;">承台梁<b>(F)</b></span>
<div class="" style="position:absolute;left:35px;top:518px;width:10px;height:0px;border-top:1px dotted #808080"></div>
<svg class="i" style="left:46px;top:510px" width="16" height="16" viewBox="0 0 16 16"><path d="M8 1v3M8 9v4" stroke="#1f2f7f" stroke-width="2"/><circle cx="8" cy="6.500" r="2.800" fill="#cfdcf4" stroke="#1f2f7f" stroke-width="1.300"/><path d="M5 11.500h6L8 15.500z" fill="#1f2f7f"/></svg>
<span class="t ss" style="left:65px;top:511px;line-height:16px;">桩<b>(U)</b></span>
<div class="" style="position:absolute;left:35px;top:534px;width:10px;height:0px;border-top:1px dotted #808080"></div>
<svg class="i" style="left:46px;top:526px" width="16" height="16" viewBox="0 0 16 16"><path d="M1 3.500h14M1 13.500h14" stroke="#2f4fb0" stroke-width="1.600"/><path d="M5.500 3.500v10M10.500 3.500v10" stroke="#2f4fb0" stroke-width="1.300"/><path d="M2 8.500h12" stroke="#9fb8e8" stroke-dasharray="1.500 1.500"/></svg>
<span class="t ss" style="left:65px;top:527px;line-height:16px;">基础板带<b>(W)</b></span>
<div class="" style="position:absolute;left:19px;top:550px;width:6px;height:0px;border-top:1px dotted #808080"></div>
<svg class="i" style="left:10px;top:545px" width="8" height="10" viewBox="0 0 8 10"><path d="M2 1l4 4-4 4" fill="none" stroke="#a0a0a0" stroke-width="1.300"/></svg>
<svg class="i" style="left:26px;top:542px" width="16" height="16" viewBox="0 0 16 16"><path d="M1.500 4.500h5l1.500 1.500h6.500v7.500h-13z" fill="#f7dc8a" stroke="#c8a040"/><path d="M1.500 7h13v6.500h-13z" fill="#fbe9a8" stroke="#c8a040"/></svg>
<span class="t ss" style="left:47px;top:543px;line-height:16px;">其它</span>
<div class="" style="position:absolute;left:19px;top:566px;width:6px;height:0px;border-top:1px dotted #808080"></div>
<svg class="i" style="left:9px;top:562px" width="10" height="8" viewBox="0 0 10 8"><path d="M1 2l4 4 4-4" fill="none" stroke="#303030" stroke-width="1.500"/></svg>
<svg class="i" style="left:26px;top:558px" width="16" height="16" viewBox="0 0 16 16"><path d="M1.500 4.500h5l1.500 1.500h5v7.500h-11.500z" fill="#f0cc70" stroke="#b89030"/><path d="M1.500 13.500l3-6h11.500l-3 6z" fill="#fbe9a8" stroke="#b89030"/></svg>
<span class="t ss" style="left:47px;top:559px;line-height:16px;">自定义</span>
<div class="" style="position:absolute;left:35px;top:582px;width:10px;height:0px;border-top:1px dotted #808080"></div>
<svg class="i" style="left:46px;top:574px" width="16" height="16" viewBox="0 0 16 16"><path d="M4 4l8 8M12 4l-8 8" stroke="#2f5fd0" stroke-width="1.500"/></svg>
<span class="t ss" style="left:65px;top:575px;line-height:16px;">自定义点</span>
<div class="" style="position:absolute;left:35px;top:598px;width:10px;height:0px;border-top:1px dotted #808080"></div>
<div class="" style="position:absolute;left:43px;top:590px;width:88px;height:16px;background:#d6d6d6"></div>
<svg class="i" style="left:132px;top:591px" width="13" height="14" viewBox="0 0 13 14"><rect x=".500" y=".500" width="12" height="13" fill="#cfe0fb" stroke="#5f8fe0"/><path d="M3.500 3v8M6.500 3v8M9.500 3v8" stroke="#3f6fd0" stroke-width="1.400"/></svg>
<svg class="i" style="left:46px;top:590px" width="16" height="16" viewBox="0 0 16 16"><rect x="2.500" y="2.500" width="11" height="11" fill="#fff" stroke="#1f2f7f" stroke-width="1.200"/><rect x="1" y="1" width="3" height="3" fill="#2f5fd0"/><rect x="12" y="1" width="3" height="3" fill="#2f5fd0"/><rect x="1" y="12" width="3" height="3" fill="#2f5fd0"/><rect x="12" y="12" width="3" height="3" fill="#2f5fd0"/></svg>
<span class="t ss" style="left:65px;top:591px;line-height:16px;">自定义线<b>(X)</b></span>
<div class="" style="position:absolute;left:35px;top:614px;width:10px;height:0px;border-top:1px dotted #808080"></div>
<svg class="i" style="left:46px;top:606px" width="16" height="16" viewBox="0 0 16 16"><path d="M1 6L6 1M1 10l9-9M1 14L14 1M4 15L15 4M8 15l7-7M12 15l3-3" stroke="#2f5fd0" stroke-width="1.100"/></svg>
<span class="t ss" style="left:65px;top:607px;line-height:16px;">自定义面</span>
<div class="" style="position:absolute;left:35px;top:630px;width:10px;height:0px;border-top:1px dotted #808080"></div>
<svg class="i" style="left:46px;top:622px" width="16" height="16" viewBox="0 0 16 16"><path d="M1 1v5M13 1v5M1 3.500h12" stroke="#333" stroke-width="1.100"/><path d="M6 5v9l2.500-2 1.500 3.500 1.500-.600-1.500-3.400h3.200z" fill="#ddd" stroke="#555" stroke-width=".800"/></svg>
<span class="t ss" style="left:65px;top:623px;line-height:16px;">尺寸标注<b>(W)</b></span>
<div class="" style="position:absolute;left:26px;top:638px;width:12px;height:2px;background:#e8d9a0"></div>
<div class="" style="position:absolute;left:66px;top:638px;width:24px;height:2px;background:repeating-linear-gradient(90deg,#444 0 2px,#fff 2px 5px)"></div>
<div class="" style="position:absolute;left:95px;top:637px;width:13px;height:3px;background:#5aa0f0"></div>
<div class="" style="position:absolute;left:110px;top:637px;width:21px;height:3px;background:repeating-linear-gradient(90deg,#f0e000 0 3px,#fff 3px 4px)"></div>
<div class="" style="position:absolute;left:147px;top:173px;width:16px;height:467px;background:#f0f0f0"></div>
<div class="" style="position:absolute;left:147px;top:347px;width:15px;height:256px;background:#cdcdcd"></div>
<svg class="i" style="left:147px;top:173px" width="16" height="467" viewBox="0 0 16 467"><path d="M4.500 12l3.500-3.500 3.500 3.500M4.500 455.500l3.500 3.500 3.500-3.500" fill="none" stroke="#505050" stroke-width="1.600"/></svg>
<div class="" style="position:absolute;left:3px;top:640px;width:160px;height:17px;background:#f0f0f0"></div>
<div class="" style="position:absolute;left:21px;top:641px;width:104px;height:15px;background:#cdcdcd"></div>
<svg class="i" style="left:3px;top:640px" width="144" height="17" viewBox="0 0 144 17"><path d="M10.500 5l-3.500 3.500 3.500 3.500M133.500 5l3.500 3.500-3.500 3.500" fill="none" stroke="#505050" stroke-width="1.600"/></svg>
<div class="btn ss" style="left:1px;top:661px;width:164px;height:22px;line-height:22px;padding-top:.500px">单构件输入</div>
<div class="btn ss" style="left:1px;top:683px;width:164px;height:22px;line-height:22px;padding-top:.500px">报表预览</div>
<svg class="i" style="left:170px;top:168px;overflow:hidden;background:#000" width="1196" height="305" viewBox="0 0 1196 305" shape-rendering="crispEdges"><g fill="none" stroke="#7c7c7c" stroke-width=".800"><circle cx="597" cy="152" r="135"/><circle cx="597" cy="17" r="8"/><circle cx="597" cy="287" r="8"/><circle cx="462" cy="152" r="8"/><circle cx="732" cy="152" r="8"/></g><g stroke="#0a8a0a" stroke-width="1" fill="none"><path d="M26.80000000000001 305L407.6 0"/><path d="M176 144.39999999999998L470 193"/><path d="M208 128L234 175"/><path d="M0 87.5L111 0"/></g><g stroke="#e00000" stroke-width="1" fill="none"><path d="M330 305L719 0"/><path d="M748 0L1196 75.69999999999999"/><path d="M994 305L1196 156.5"/><path d="M469 193L1113 305"/></g><path fill="none" stroke="#aa9b95" stroke-width="2" d="M308.0 -48.0L524.0 -44.8M313.5 -47.8L315.0 -32.3M309.8 -37.0L524.6 -37.0M315.3 -36.9L316.9 -21.4M311.7 -26.0L525.2 -29.3M317.1 -26.0L318.9 -10.5M313.5 -15.0L525.8 -21.5M318.9 -15.1L320.8 0.4M315.3 -4.0L526.4 -13.7M320.7 -4.2L322.7 11.3M317.2 7.0L527.0 -6.0M322.5 6.7L324.7 22.2M319.0 18.0L527.6 1.8M324.3 17.6L326.6 33.1M321.3 24.5L528.5 6.4M326.6 24.0L329.0 39.6M323.7 31.0L529.5 10.9M328.9 30.4L331.3 46.1M326.0 37.5L530.4 15.5M331.2 36.8L333.7 52.7M328.3 44.0L531.3 20.1M333.6 43.2L336.1 59.2M330.7 50.5L532.3 24.6M335.9 49.6L338.4 65.8M333.0 57.0L533.2 29.2M338.2 56.0L340.8 72.3M337.5 63.2L535.7 33.4M342.6 62.2L345.3 78.3M342.0 69.3L538.2 37.6M347.1 68.3L349.9 84.3M346.5 75.5L540.7 41.8M351.6 74.4L354.4 90.3M351.0 81.7L543.2 46.0M356.0 80.5L358.9 96.3M355.5 87.8L545.7 50.2M360.5 86.6L363.4 102.2M360.0 94.0L548.2 54.4M365.0 92.7L368.0 108.2M366.4 100.1L552.0 58.0M371.3 98.8L374.4 114.2M372.8 106.2L555.9 61.6M377.7 104.8L380.8 120.1M379.2 112.2L559.7 65.2M384.1 110.8L387.3 126.0M385.7 118.3L563.5 68.8M390.5 116.9L393.7 131.9M392.1 124.4L567.4 72.4M396.8 122.9L400.1 137.8M398.5 130.5L571.2 76.0M403.2 129.0L406.6 143.7M406.4 135.4L577.3 79.2M411.1 133.8L414.8 148.2M414.3 140.3L583.4 82.4M419.0 138.7L423.0 152.7M422.2 145.2L589.5 85.6M426.8 143.6L431.2 157.2M430.2 150.2L595.6 88.8M434.7 148.5L439.3 161.8M438.1 155.1L601.7 92.0M442.6 153.4L447.5 166.3M446.0 160.0L607.8 95.2M450.5 158.3L455.7 170.8M457.2 164.8L613.7 97.8M461.5 163.1L466.5 175.6M468.3 169.7L619.6 100.4M472.6 167.9L477.3 180.4M479.5 174.5L625.5 103.0M483.6 172.6L488.1 185.1M490.7 179.3L631.4 105.6M494.7 177.4L498.9 189.9M501.8 184.2L637.3 108.2M505.7 182.2L509.7 194.7M513.0 189.0L643.2 110.8M516.8 187.0L520.5 199.5M524.2 192.7L651.7 113.8M527.9 190.6L531.6 203.3M535.3 196.3L660.2 116.7M539.0 194.3L542.7 207.0M546.5 200.0L668.7 119.7M550.1 197.9L553.8 210.8M557.7 203.7L677.2 122.7M561.2 201.6L564.9 214.6M568.8 207.3L685.7 125.6M572.2 205.2L576.0 218.3M580.0 211.0L694.2 128.6M583.3 208.8L587.1 222.1M593.1 213.5L704.0 130.9M596.3 211.3L599.6 224.7M606.1 216.0L713.9 133.3M609.3 213.8L612.2 227.3M619.2 218.5L723.7 135.6M622.3 216.3L624.7 229.9M632.3 221.0L733.6 137.9M635.2 218.8L637.3 232.5M645.3 223.5L743.4 140.3M648.2 221.3L649.8 235.1M658.4 226.0L753.3 142.6M661.2 223.8L662.4 237.8M672.5 227.8L764.1 144.3M675.1 225.5L676.5 239.6M686.5 229.5L774.9 146.0M689.1 227.2L690.7 241.5M700.6 231.3L785.8 147.7M703.0 229.0L704.9 243.4M714.6 233.0L796.6 149.3M717.0 230.7L719.0 245.3M728.7 234.8L807.6 150.7M731.0 232.5L733.3 247.2M743.1 236.5L818.8 152.1M745.3 234.2L747.7 249.1M758.5 237.5L830.7 152.3M760.6 235.2L763.1 250.0M774.5 238.5L843.0 152.4M776.5 236.2L779.0 250.9M791.1 239.5L855.7 152.5M792.9 237.2L795.4 251.9M808.3 240.6L868.9 152.7M810.0 238.2L812.6 253.0M826.4 241.7L882.8 153.0M828.0 239.3L830.5 254.1M846.1 241.8L897.8 152.7M847.6 239.5L849.7 254.4M867.0 241.6L913.6 152.4M868.3 239.3L869.9 254.4M888.4 241.4L929.7 152.4M889.5 239.0L890.5 254.4M909.8 241.2L945.8 152.4M910.8 238.8L911.2 254.4M931.4 240.7L962.0 152.2M932.2 238.3L932.2 254.2M953.5 239.3L978.1 151.2M954.1 237.0L954.1 253.2M975.5 237.9L994.2 150.2M976.0 235.6L976.0 252.2M997.6 236.6L1010.4 149.2M997.9 234.3L997.9 251.2M1019.6 235.2L1026.5 148.2M1019.7 232.9L1019.7 250.2M1040.9 233.5L1042.8 146.5M1040.9 231.2L1041.2 247.8M1062.0 231.6L1059.2 144.6M1061.9 229.4L1062.5 245.3M1083.1 229.8L1075.6 142.8M1082.9 227.6L1083.9 242.7M1104.3 228.0L1091.9 141.0M1103.9 225.8L1105.2 240.2M1125.5 225.8L1108.3 138.7M1125.0 223.5L1126.5 237.5M1146.9 223.1L1124.7 135.7M1146.2 220.8L1147.7 234.8M1168.3 220.3L1141.0 132.8M1167.4 218.0L1168.9 232.0M1189.6 217.6L1157.4 129.8M1188.6 215.3L1190.1 229.3M1210.8 214.8L1173.6 126.9M1209.7 212.5L1211.2 226.5M1229.0 211.4L1186.5 123.7M1227.7 209.1L1229.2 223.1M1247.2 208.0L1199.5 120.5M1245.8 205.7L1247.3 219.7M1265.4 204.6L1212.5 117.3M1263.8 202.3L1265.3 216.3M1283.6 201.2L1225.4 114.1M1281.8 198.9L1283.3 212.9"/><defs><pattern id="dm" width="10" height="12" patternUnits="userSpaceOnUse"><path d="M-1 -1.200L11 13.200M11 -1.200L-1 13.200" stroke="#aa9b95" stroke-width="1.700" fill="none"/></pattern></defs><path fill="url(#dm)" d="M548.0 1.0L548.8 7.2L549.6 13.4L550.4 19.6L551.2 25.8L552.0 32.0L554.2 36.8L556.4 41.6L558.6 46.4L560.8 51.2L563.0 56.0L566.8 59.6L570.6 63.2L574.4 66.8L578.2 70.4L582.0 74.0L588.8 77.2L595.6 80.4L602.4 83.6L609.2 86.8L616.0 90.0L622.0 92.6L612.9 110.8L604.2 106.9L595.5 103.0L587.4 98.2L579.3 93.4L571.8 88.4L565.3 83.2L559.7 78.1L557.2 72.7L555.1 67.7L552.9 63.0L550.2 58.6L546.4 54.2L543.2 49.1L540.1 44.1L537.0 39.0L533.9 33.9L530.9 28.8L529.7 23.5L528.5 18.1L527.4 12.7L526.2 7.3z"/><path fill="none" stroke="#aa9b95" stroke-width="1.800" d="M582.0 95.3L604.7 84.7M550.2 74.5L604.7 84.7M589.0 102.3L610.3 87.3M555.0 79.0L610.3 87.3M596.1 111.9L616.0 90.0M561.7 83.0L616.0 90.0M603.8 122.6L621.0 92.2M568.5 87.0L621.0 92.2M611.7 134.2L626.0 94.3M575.2 91.0L626.0 94.3M619.6 145.9L631.0 96.5M582.0 95.3L631.0 96.5M627.5 156.6L636.0 98.7M589.0 102.3L636.0 98.7M635.2 165.4L641.0 100.8M596.1 111.9L641.0 100.8M642.8 171.2L646.0 103.0M603.8 122.6L646.0 103.0M652.0 173.9L654.3 106.2M611.7 134.2L654.3 106.2M661.1 176.6L662.7 109.3M619.6 145.9L662.7 109.3M670.2 179.2L671.0 112.5M627.5 156.6L671.0 112.5M679.4 181.9L679.3 115.7M635.2 165.4L679.3 115.7M688.5 184.6L687.7 118.8M642.8 171.2L687.7 118.8M697.7 187.2L696.0 122.0M652.0 173.9L696.0 122.0M707.3 189.2L705.8 124.5M661.1 176.6L705.8 124.5M717.0 191.2L715.7 127.0M670.2 179.2L715.7 127.0M726.6 193.2L725.5 129.5M679.4 181.9L725.5 129.5M736.2 195.2L735.3 132.0M688.5 184.6L735.3 132.0M745.9 197.2L745.2 134.5M697.7 187.2L745.2 134.5M755.5 199.2L755.0 137.0M707.3 189.2L755.0 137.0M766.6 200.5L765.8 138.8M717.0 191.2L765.8 138.8M777.7 201.8L776.7 140.7M726.6 193.2L776.7 140.7M788.8 203.1L787.5 142.5M736.2 195.2L787.5 142.5M799.9 204.4L798.3 144.3M744.2 197.7L798.3 144.3M811.0 205.7L809.2 146.2M749.4 201.2L809.2 146.2M822.4 207.1L820.3 148.0M754.0 204.8L820.3 148.0M833.8 208.0L831.9 148.8M768.9 210.6L831.9 148.8M845.7 208.9L844.0 149.6M771.6 215.7L844.0 149.6M858.0 209.9L856.4 150.4M786.9 222.7L856.4 150.4M870.8 210.9L869.5 151.2M791.2 227.8L869.5 151.2M884.2 211.9L883.1 152.1M797.4 232.8L883.1 152.1M899.0 212.2L897.9 152.4M822.7 238.1L897.9 152.4M914.7 212.3L913.6 152.4M836.5 241.2L913.6 152.4M930.8 212.3L929.7 152.4M854.8 241.8L929.7 152.4M946.9 212.3L945.8 152.4M874.7 241.7L945.8 152.4M962.9 212.1L962.0 152.2M895.1 241.6L962.0 152.2M978.3 211.2L978.1 151.2M915.5 241.5L978.1 151.2M993.7 210.3L994.2 150.2M936.1 241.1L994.2 150.2M1009.2 209.4L1010.4 149.2M957.2 239.9L1010.4 149.2M1024.6 208.5L1026.5 148.2M978.2 238.7L1026.5 148.2M1041.5 206.3L1042.8 146.5M999.3 237.6L1042.8 146.5M1058.6 204.0L1059.2 144.6M1020.4 236.4L1059.2 144.6M1075.7 201.6L1075.6 142.8M1041.1 234.4L1075.6 142.8M1092.8 199.2L1091.9 141.0M1061.7 232.2L1091.9 141.0M1109.6 196.8L1108.3 138.7M1082.4 230.1L1108.3 138.7M1126.2 194.4L1124.7 135.7M1103.0 227.9L1124.7 135.7M1142.8 192.0L1141.0 132.8M1123.7 225.5L1141.0 132.8M1159.4 189.6L1157.4 129.8M1144.3 222.8L1157.4 129.8M1175.9 187.1L1173.6 126.9M1164.9 220.2L1173.6 126.9M1188.8 184.0L1186.5 123.7M1185.6 217.5L1186.5 123.7M1201.8 180.8L1199.5 120.5M1206.1 214.8L1199.5 120.5M1214.7 177.6L1212.5 117.3M1223.5 211.4L1212.5 117.3M1227.7 174.4L1225.4 114.1M1240.9 208.0L1225.4 114.1"/><path fill="#aa9b95" d="M528 0L540 0L543 47L547 82L546 100L539 94L532 57z"/><path fill="none" stroke="#aa9b95" stroke-width="1" d="M338.5 -46.7L348.7 15.5L361.7 51.7L387.7 87.0L424.6 121.9L470.9 150.5L534.0 177.9L598.6 198.9L673.8 213.5L754.9 223.8L840.2 228.9L930.8 227.9L1023.7 222.2L1113.3 214.5L1203.8 202.2L1280.0 187.3M369.0 -45.3L378.3 13.0L390.3 46.3L415.3 80.0L450.7 113.3L495.8 141.0L555.0 166.8L617.1 186.8L689.2 201.0L767.0 211.0L848.7 215.8L935.5 214.8L1024.3 209.5L1110.7 202.0L1197.5 189.3L1270.0 174.7M399.5 -44.0L408.0 10.5L419.0 41.0L443.0 73.0L476.8 104.8L520.8 131.5L576.0 155.8L635.7 174.8L704.5 188.5L779.2 198.2L857.3 202.8L940.3 201.8L1025.0 196.8L1108.0 189.5L1191.3 176.5L1260.0 162.0M430.0 -42.7L437.7 8.0L447.7 35.7L470.7 66.0L502.8 96.2L545.7 122.0L597.0 144.7L654.3 162.7L719.9 176.0L791.4 185.5L865.9 189.7L945.1 188.7L1025.7 184.0L1105.3 177.0L1185.1 163.7L1250.0 149.3M460.5 -41.3L467.3 5.5L476.3 30.3L498.3 59.0L528.9 87.6L570.6 112.5L618.0 133.6L672.8 150.6L735.3 163.5L803.5 172.8L874.4 176.6L949.8 175.6L1026.3 171.2L1102.7 164.5L1178.8 150.8L1240.0 136.7M491.3 -30.1L497.7 13.9L506.3 38.5L527.6 65.9L556.3 92.5L596.3 116.2L640.1 136.9L693.2 152.9L752.1 165.2L817.6 173.9L884.5 177.9L955.9 177.2L1027.0 173.2L1100.7 165.5L1173.4 152.5L1230.7 138.5M491.7 -20.2L498.3 24.8L507.6 52.1L529.3 79.7L557.6 106.1L597.1 129.4L641.2 151.2L695.1 167.2L753.5 179.4L819.5 187.7L886.0 192.2L957.2 191.9L1027.0 187.9L1101.3 179.1L1174.2 167.0L1231.3 153.0M518.5 -44.0L522.5 2.0L528.5 28.5L544.5 54.0L568.5 76.5L605.8 96.5L642.5 112.8L693.7 130.2L752.9 144.0L817.9 154.0L885.0 157.9L956.3 157.4L1028.0 153.2L1100.5 146.0L1172.8 132.5L1230.0 118.5"/><path fill="none" stroke="#fff" stroke-width="2" stroke-linejoin="round" d="M491.0 -40.0L497.0 3.0L505.0 25.0L526.0 52.0L555.0 79.0L595.5 103.0L639.0 122.5L691.4 138.5L750.7 151.0L815.7 160.0L883.0 163.5L954.6 162.5L1027.0 158.5L1100.0 152.0L1172.6 138.0L1230.0 124.0M492.0 -10.0L499.0 36.0L509.0 66.0L531.0 94.0L559.0 120.0L598.0 143.0L642.4 166.0L697.0 182.0L755.0 194.0L821.4 202.0L887.5 207.0L958.6 207.0L1027.0 203.0L1102.0 193.0L1175.0 182.0L1232.0 168.0M308.0 -48.0L319.0 18.0L333.0 57.0L360.0 94.0L398.5 130.5L446.0 160.0L513.0 189.0L580.0 211.0L658.4 226.0L742.7 236.5L831.6 242.0L926.0 241.0L1023.0 235.0L1116.0 227.0L1210.0 215.0L1290.0 200.0M310.0 -30.0L322.0 36.0L336.5 76.0L364.0 112.0L403.0 147.5L453.0 174.0L518.0 203.0L585.0 226.0L660.0 242.0L746.0 253.6L835.0 259.0L926.0 259.4L1023.0 255.4L1118.0 243.0L1212.0 231.0L1292.0 216.0M308.0 -48.0L491.0 -40.0L492.0 -10.0L310.0 -30.0L308.0 -48.0M319.0 18.0L497.0 3.0L499.0 36.0L322.0 36.0L319.0 18.0M333.0 57.0L505.0 25.0L509.0 66.0L336.5 76.0L333.0 57.0M360.0 94.0L526.0 52.0L531.0 94.0L364.0 112.0L360.0 94.0M398.5 130.5L555.0 79.0L559.0 120.0L403.0 147.5L398.5 130.5M446.0 160.0L595.5 103.0L598.0 143.0L453.0 174.0L446.0 160.0M513.0 189.0L639.0 122.5L642.4 166.0L518.0 203.0L513.0 189.0M580.0 211.0L691.4 138.5L697.0 182.0L585.0 226.0L580.0 211.0M658.4 226.0L750.7 151.0L755.0 194.0L660.0 242.0L658.4 226.0M742.7 236.5L815.7 160.0L821.4 202.0L746.0 253.6L742.7 236.5M831.6 242.0L883.0 163.5L887.5 207.0L835.0 259.0L831.6 242.0M926.0 241.0L954.6 162.5L958.6 207.0L926.0 259.4L926.0 241.0M1023.0 235.0L1027.0 158.5L1027.0 203.0L1023.0 255.4L1023.0 235.0M1116.0 227.0L1100.0 152.0L1102.0 193.0L1118.0 243.0L1116.0 227.0M1210.0 215.0L1172.6 138.0L1175.0 182.0L1212.0 231.0L1210.0 215.0M1290.0 200.0L1230.0 124.0L1232.0 168.0L1292.0 216.0L1290.0 200.0"/><circle cx="699" cy="13" r="12" fill="none" stroke="#0a8a0a"/><text x="699" y="18" fill="#fff" font-size="13" text-anchor="middle" font-family="Liberation Sans,sans-serif">1</text><circle cx="823" cy="13" r="12" fill="none" stroke="#0a8a0a"/><text x="823" y="18" fill="#fff" font-size="13" text-anchor="middle" font-family="Liberation Sans,sans-serif">E</text><circle cx="1192" cy="150" r="12" fill="none" stroke="#0a8a0a"/><circle cx="-4" cy="115" r="12" fill="none" stroke="#0a8a0a"/><text x="0" y="0" fill="#f0f0f0" font-size="15" font-family="Liberation Sans,sans-serif" transform="translate(435 82) rotate(-88)">2400</text><g><path d="M54.69999999999999 257L50.599999999999994 222" stroke="#1080ff" stroke-width="4"/><path d="M49.400000000000006 210.5l-3.700 11.500h8.600z" fill="#1080ff"/><path d="M56 258L76 242" stroke="#10e010" stroke-width="4"/><path d="M82 237l-9 2 5 6z" fill="#10e010"/><path d="M56 256L86 261" stroke="#ff1010" stroke-width="4"/><path d="M95 262l-9-5-1 9z" fill="#ff1010"/><text x="36.5" y="214.5" fill="#1080ff" font-size="13.500" font-family="Liberation Sans,sans-serif">Z</text><text x="83" y="243" fill="#10c010" font-size="12" font-family="Liberation Sans,sans-serif">Y</text><text x="95" y="259" fill="#ff1010" font-size="12" font-family="Liberation Sans,sans-serif">X</text></g></svg>
<div class="" style="position:absolute;left:180px;top:171px;width:167px;height:178px;background:#fff;border:1px solid #c8c8c8;box-sizing:border-box"></div>
<div class="" style="position:absolute;left:181px;top:202px;width:165px;height:145px;background:#fff;border:1px solid #9aa0a8;box-sizing:border-box"></div>
<span class="t" style="left:188px;top:178px;line-height:16px;color:#a8a8a8">钢筋显示控制面板</span>
<svg class="i" style="left:185px;top:205px" width="11" height="11" viewBox="0 0 11 11"><rect x=".500" y=".500" width="10" height="10" fill="#fff" stroke="#8c8c8c"/><path d="M2.500 5.500l2 2.200 4-4.700" fill="none" stroke="#4a4a4a" stroke-width="1.200"/></svg>
<span class="t ss" style="left:199px;top:205.5px;line-height:12px;">水平纵筋</span>
<svg class="i" style="left:185px;top:217px" width="11" height="11" viewBox="0 0 11 11"><rect x=".500" y=".500" width="10" height="10" fill="#fff" stroke="#8c8c8c"/><path d="M2.500 5.500l2 2.200 4-4.700" fill="none" stroke="#4a4a4a" stroke-width="1.200"/></svg>
<span class="t ss" style="left:199px;top:217.5px;line-height:12px;">横向钢筋</span>
<svg class="i" style="left:185px;top:229px" width="11" height="11" viewBox="0 0 11 11"><rect x=".500" y=".500" width="10" height="10" fill="#fff" stroke="#8c8c8c"/><path d="M2.500 5.500l2 2.200 4-4.700" fill="none" stroke="#4a4a4a" stroke-width="1.200"/></svg>
<span class="t ss" style="left:199px;top:229.5px;line-height:12px;">显示其它图元</span>
<svg class="i" style="left:185px;top:241px" width="11" height="11" viewBox="0 0 11 11"><rect x=".500" y=".500" width="10" height="10" fill="#fff" stroke="#8c8c8c"/><path d="M2.500 5.500l2 2.200 4-4.700" fill="none" stroke="#4a4a4a" stroke-width="1.200"/></svg>
<span class="t ss" style="left:199px;top:241.5px;line-height:12px;">显示详细公式</span>
<div class="" style="position:absolute;left:170px;top:474px;width:1196px;height:1px;background:#fff"></div>
<div class="tb" style="position:absolute;left:171px;top:476px;width:205px;height:26px;"></div>
<span class="grip" style="left:175px;top:480px;height:16px"></span>
<svg class="i" style="left:181px;top:480px" width="16" height="16" viewBox="0 0 16 16"><path d="M4.500 0v16" stroke="#e09a9a" stroke-width="2.400"/><path d="M0 3.200h14" stroke="#e09a9a" stroke-width="2.400"/><path d="M8 8l6 5.500-3 .200 1.300 2.500-1.300.600-1.300-2.600-1.700 1.600z" fill="#e8e8e8" stroke="#666" stroke-width=".800"/></svg>
<span class="t" style="left:201px;top:480px;line-height:16px;">正交</span>
<div class="act" style="position:absolute;left:229px;top:476px;width:75px;height:25px;"></div>
<svg class="i" style="left:233px;top:480px" width="16" height="16" viewBox="0 0 16 16"><path d="M2.500 1v14M13.500 2v8" stroke="#8a2a20" stroke-width="1.300"/><path d="M0 7.500h16" stroke="#8a2a20" stroke-width="1.200"/><path d="M4 9c2-2 5-2.500 8-.500 2 1.500 2.500 4 .500 5.500-2.500 1.500-6 1-7.500-.500z" fill="#e8c060" stroke="#8a6a20" stroke-width=".800"/><path d="M5 9.500l4 2M7 8.500l3.500 2" stroke="#8a6a20" stroke-width=".700"/></svg>
<span class="t" style="left:251px;top:480px;line-height:16px;">对象捕捉</span>
<svg class="i" style="left:307px;top:480px" width="16" height="16" viewBox="0 0 16 16"><path d="M1 2.500h14M1.500 1v4M14.500 1v4" stroke="#c08888" stroke-width="1.200" fill="none"/><path d="M1 6.500h14" stroke="#888" stroke-width="1"/><rect x="3.500" y="8.500" width="10" height="6.500" fill="#fff" stroke="#222"/><path d="M6.500 10v4M9 10.300h2.300v1.600H9v1.800h2.500" stroke="#111" fill="none" stroke-width=".900"/></svg>
<span class="t" style="left:327px;top:480px;line-height:16px;">动态输入</span>
<div class="tb" style="position:absolute;left:381px;top:476px;width:262px;height:26px;"></div>
<span class="grip" style="left:385px;top:480px;height:16px"></span>
<svg class="i" style="left:392px;top:480px" width="16" height="16" viewBox="0 0 16 16"><path d="M1.500 1.500l13 13M14.500 1.500l-13 13" stroke="#2a62c8" stroke-width="1.300"/><rect x="6" y="6" width="4" height="4" fill="#1a2f80"/></svg>
<span class="t" style="left:412px;top:480px;line-height:16px;">交点</span>
<div class="act" style="position:absolute;left:440px;top:476px;width:51px;height:25px;"></div>
<svg class="i" style="left:444px;top:480px" width="16" height="16" viewBox="0 0 16 16"><path d="M0 11h16" stroke="#2a62c8" stroke-width="1.300"/><path d="M11.500 1v10" stroke="#2a62c8" stroke-width="1.300"/><rect x="10" y="9.500" width="3" height="3" fill="#1a2f80"/></svg>
<span class="t" style="left:463px;top:480px;line-height:16px;">垂点</span>
<div class="act" style="position:absolute;left:490px;top:476px;width:52px;height:25px;"></div>
<svg class="i" style="left:494px;top:480px" width="16" height="16" viewBox="0 0 16 16"><path d="M0 8h6M10 8h5" stroke="#2a62c8" stroke-width="1.300"/><rect x="6" y="6" width="4" height="4" fill="#1a2f80"/></svg>
<span class="t" style="left:514px;top:480px;line-height:16px;">中点</span>
<svg class="i" style="left:545px;top:480px" width="16" height="16" viewBox="0 0 16 16"><path d="M8 1.500l6.500 5-2.500 8h-8l-2.500-8z" fill="#fff" stroke="#2a62c8" stroke-width="1.300"/><rect x="3.200" y="13.500" width="2" height="2" fill="#1a2f80"/><rect x="10.800" y="13.500" width="2" height="2" fill="#1a2f80"/></svg>
<span class="t" style="left:565px;top:480px;line-height:16px;">顶点</span>
<svg class="i" style="left:596px;top:480px" width="16" height="16" viewBox="0 0 16 16"><path d="M4 3v11M1 11h14M12 3v11" stroke="#1f5fb0" stroke-width="1.100" stroke-dasharray="2 1.200"/><path d="M2 5l4 5 4-6 4 4" fill="none" stroke="#1f3f8f" stroke-width="1.200"/><circle cx="3" cy="2" r="1" fill="#1f3f8f"/><circle cx="13" cy="2" r="1" fill="#1f3f8f"/></svg>
<span class="t" style="left:616px;top:480px;line-height:16px;">坐标</span>
<div class="tb" style="position:absolute;left:646px;top:476px;width:410px;height:26px;"></div>
<span class="grip" style="left:650px;top:480px;height:16px"></span>
<div class="cb" style="position:absolute;left:655px;top:477px;width:45px;height:23px;"></div>
<div class="" style="position:absolute;left:700px;top:477px;width:13px;height:23px;background:linear-gradient(#fdfdfd,#f0f0f0)"></div>
<span class="t" style="left:657px;top:480px;line-height:16px;">不偏移</span>
<span class="dd" style="left:704px;top:487px;border-top-color:#000"></span>
<span class="sep" style="left:716px;top:479px;height:18px"></span>
<span class="t g" style="left:720px;top:480px;line-height:16px;font-size:13px">X=</span>
<div class="" style="position:absolute;left:738px;top:477px;width:59px;height:23px;background:#f2f2f2;border:1px solid #7a7a7a;box-sizing:border-box"></div><span class="t g" style="left:771px;top:480px;line-height:16px;font-size:13px">0</span><svg class="i" style="left:786px;top:479px" width="9" height="19" viewBox="0 0 9 19"><path d="M1.500 6.500l3-3 3 3zM1.500 12.500l3 3 3-3z" fill="#444"/></svg>
<span class="t g" style="left:799px;top:480px;line-height:16px;font-size:13px">mm</span>
<span class="t g" style="left:826px;top:480px;line-height:16px;font-size:13px">Y=</span>
<div class="" style="position:absolute;left:843px;top:477px;width:59px;height:23px;background:#f2f2f2;border:1px solid #7a7a7a;box-sizing:border-box"></div><span class="t g" style="left:876px;top:480px;line-height:16px;font-size:13px">0</span><svg class="i" style="left:891px;top:479px" width="9" height="19" viewBox="0 0 9 19"><path d="M1.500 6.500l3-3 3 3zM1.500 12.500l3 3 3-3z" fill="#444"/></svg>
<span class="t g" style="left:902px;top:480px;line-height:16px;font-size:13px">mm</span>
<span class="sep" style="left:928px;top:479px;height:18px"></span>
<div class="" style="position:absolute;left:932px;top:483px;width:11px;height:11px;background:#fff;border:1px solid #7a7a7a;box-sizing:border-box"></div>
<span class="t" style="left:951px;top:480px;line-height:16px;">旋转</span>
<div class="" style="position:absolute;left:980px;top:477px;width:67px;height:23px;background:#f2f2f2;border:1px solid #7a7a7a;box-sizing:border-box"></div><span class="t g" style="left:997px;top:480px;line-height:16px;font-size:13px">0.000</span><svg class="i" style="left:1036px;top:479px" width="9" height="19" viewBox="0 0 9 19"><path d="M1.500 6.500l3-3 3 3zM1.500 12.500l3 3 3-3z" fill="#444"/></svg>
<span class="t g" style="left:1049px;top:477px;line-height:16px;font-size:13px">°</span>
<div class="tb" style="position:absolute;left:183px;top:508px;width:1180px;height:24px;"></div>
<svg class="i" style="left:170px;top:507px" width="12" height="12" viewBox="0 0 12 12"><rect x=".500" y=".500" width="11" height="11" fill="#e8a8a0" stroke="#5a2020"/><path d="M1 2l10 9M11 2L1 11" stroke="#fff" stroke-width="1.600"/><path d="M1 2h10" stroke="#5a2020"/></svg>
<div class="" style="position:absolute;left:173px;top:521px;width:8px;height:182px;background-image:radial-gradient(circle at 1.500px 1.500px,#b8b8b8 .900px,transparent 1.300px);background-size:4px 4px"></div>
<svg class="i" style="left:186px;top:511px" width="16" height="16" viewBox="0 0 16 16"><path d="M3 3v10" stroke="#c0c0c8" stroke-width="2"/><path d="M12 3v10l-7-5z" fill="#c0c0c8"/></svg>
<svg class="i" style="left:210px;top:511px" width="16" height="16" viewBox="0 0 16 16"><path d="M11 3v10l-7-5z" fill="#c0c0c8"/></svg>
<svg class="i" style="left:234px;top:511px" width="16" height="16" viewBox="0 0 16 16"><path d="M5 3v10l7-5z" fill="#2a5fd8"/></svg>
<svg class="i" style="left:258px;top:511px" width="16" height="16" viewBox="0 0 16 16"><path d="M13 3v10" stroke="#2a5fd8" stroke-width="2"/><path d="M4 3v10l7-5z" fill="#2a5fd8"/></svg>
<span class="sep" style="left:279px;top:511px;height:18px"></span>
<svg class="i" style="left:284px;top:511px" width="16" height="16" viewBox="0 0 16 16"><path d="M8 3l4.500 5h-3v5h-3V8h-3z" fill="#c8c8d0"/></svg>
<svg class="i" style="left:308px;top:511px" width="16" height="16" viewBox="0 0 16 16"><path d="M8 13l4.500-5h-3V3h-3v5h-3z" fill="#3a6fe0" stroke="#1f3fa0" stroke-width=".600"/></svg>
<span class="sep" style="left:331px;top:511px;height:18px"></span>
<svg class="i" style="left:337px;top:511px" width="16" height="16" viewBox="0 0 16 16"><path d="M2 2v12M2 4h5M2 8h5M2 12h5" stroke="#c0c0c0" fill="none" stroke-width="1.200"/><path d="M8 8h5" stroke="#b0b0b0"/><path d="M15 8l-3-2.200v4.400z" fill="#b0b0b0"/></svg>
<span class="t g" style="left:357px;top:512px;line-height:16px;">插入</span>
<svg class="i" style="left:387px;top:511px" width="16" height="16" viewBox="0 0 16 16"><path d="M1 4h8M1 8h8M1 12h8" stroke="#c0c0c0" stroke-width="1.300"/><path d="M10 8h3" stroke="#b0b0b0"/><path d="M15.500 8l-3-2.200v4.400z" fill="#b0b0b0"/></svg>
<span class="t g" style="left:407px;top:512px;line-height:16px;">删除</span>
<svg class="i" style="left:439px;top:511px" width="16" height="16" viewBox="0 0 16 16"><path d="M2 1v14M2 14.500h12" stroke="#aaa" stroke-width="1.200" stroke-dasharray="2 1"/><path d="M5 3h9M5 6h7M5 9h5" stroke="#c8c8c8" stroke-width="1.200"/></svg>
<span class="t g" style="left:459px;top:512px;line-height:16px;">缩尺配筋</span>
<svg class="i" style="left:514px;top:511px" width="16" height="16" viewBox="0 0 16 16"><path d="M1 5h6v9H1z" fill="#fff" stroke="#444"/><path d="M7 10l6-7 2 1.500-6 7-2.500 1z" fill="#f0b050" stroke="#7a4a10" stroke-width=".800"/><path d="M3 3.500l3-2 2 2" fill="none" stroke="#444"/></svg>
<span class="t" style="left:534px;top:512px;line-height:16px;">钢筋信息</span>
<svg class="i" style="left:589px;top:511px" width="16" height="16" viewBox="0 0 16 16"><rect x="1" y="2.500" width="14" height="11" fill="#f4f8ff" stroke="#2f4f9f"/><rect x="1" y="2.500" width="14" height="2.500" fill="#3f5fb0"/><path d="M3 8h4M3 11h6" stroke="#6f8fc0"/><rect x="10" y="7" width="3.500" height="4" fill="#c8d8f4" stroke="#6f8fc0" stroke-width=".600"/></svg>
<span class="t" style="left:609px;top:512px;line-height:16px;">钢筋图库</span>
<svg class="i" style="left:664px;top:511px" width="16" height="16" viewBox="0 0 16 16"><rect x="1" y="3" width="10" height="9" fill="#fff" stroke="#555"/><path d="M2.500 5.500h6M2.500 8h6" stroke="#999"/><path d="M8 9.500h4v-2l3.500 3.200-3.500 3.200v-2H8z" fill="#3a7fe0" stroke="#1f4fa0" stroke-width=".600"/></svg>
<span class="t" style="left:684px;top:512px;line-height:16px;">其他</span>
<span class="dd" style="left:710px;top:519px;border-top-color:#000"></span>
<span class="t" style="left:725px;top:512px;line-height:16px;">关闭</span>
<span class="sep" style="left:757px;top:511px;height:18px"></span>
<span class="t" style="left:764px;top:512px;line-height:16px;letter-spacing:.330px">单构件钢筋总重(kg): 181.406</span>
<div class="" style="position:absolute;left:182px;top:533px;width:1182px;height:173px;background:#fff;border:1px solid #9a9a9a;box-sizing:border-box"></div>
<div style="position:absolute;left:182px;top:534px;width:1165px;height:154px;overflow:hidden"><div class="ss" style="position:absolute;left:1px;top:0;width:33px;height:19px;background:linear-gradient(#fdfdfd,#ececec);border-right:1px solid #c0c0c0;border-bottom:1px solid #c0c0c0;text-align:center;line-height:24px;color:#000;overflow:hidden;white-space:nowrap"></div><div class="ss" style="position:absolute;left:35px;top:0;width:72px;height:19px;background:linear-gradient(#fad898,#f2bf5c);border-right:1px solid #c0c0c0;border-bottom:1px solid #c0c0c0;text-align:center;line-height:24px;color:#5a005a;overflow:hidden;white-space:nowrap">筋号</div><div class="ss" style="position:absolute;left:108px;top:0;width:55px;height:19px;background:linear-gradient(#fdfdfd,#ececec);border-right:1px solid #c0c0c0;border-bottom:1px solid #c0c0c0;text-align:center;line-height:24px;color:#000;overflow:hidden;white-space:nowrap">直径<b>(mm)</b></div><div class="ss" style="position:absolute;left:164px;top:0;width:35px;height:19px;background:linear-gradient(#fdfdfd,#ececec);border-right:1px solid #c0c0c0;border-bottom:1px solid #c0c0c0;text-align:center;line-height:24px;color:#000;overflow:hidden;white-space:nowrap">级别</div><div class="ss" style="position:absolute;left:200px;top:0;width:32px;height:19px;background:linear-gradient(#fdfdfd,#ececec);border-right:1px solid #c0c0c0;border-bottom:1px solid #c0c0c0;text-align:center;line-height:24px;color:#000;overflow:hidden;white-space:nowrap">图号</div><div class="ss" style="position:absolute;left:233px;top:0;width:210px;height:19px;background:linear-gradient(#fdfdfd,#ececec);border-right:1px solid #c0c0c0;border-bottom:1px solid #c0c0c0;text-align:center;line-height:24px;color:#000;overflow:hidden;white-space:nowrap">图形</div><div class="ss" style="position:absolute;left:444px;top:0;width:164px;height:19px;background:linear-gradient(#fdfdfd,#ececec);border-right:1px solid #c0c0c0;border-bottom:1px solid #c0c0c0;text-align:center;line-height:24px;color:#000;overflow:hidden;white-space:nowrap">计算公式</div><div class="ss" style="position:absolute;left:609px;top:0;width:156px;height:19px;background:linear-gradient(#fdfdfd,#ececec);border-right:1px solid #c0c0c0;border-bottom:1px solid #c0c0c0;text-align:center;line-height:24px;color:#000;overflow:hidden;white-space:nowrap">公式描述</div><div class="ss" style="position:absolute;left:766px;top:0;width:60px;height:19px;background:linear-gradient(#fdfdfd,#ececec);border-right:1px solid #c0c0c0;border-bottom:1px solid #c0c0c0;text-align:center;line-height:24px;color:#000;overflow:hidden;white-space:nowrap">长度<b>(mm)</b></div><div class="ss" style="position:absolute;left:827px;top:0;width:37px;height:19px;background:linear-gradient(#fdfdfd,#ececec);border-right:1px solid #c0c0c0;border-bottom:1px solid #c0c0c0;text-align:center;line-height:24px;color:#000;overflow:hidden;white-space:nowrap">根数</div><div class="ss" style="position:absolute;left:865px;top:0;width:38px;height:19px;background:linear-gradient(#fdfdfd,#ececec);border-right:1px solid #c0c0c0;border-bottom:1px solid #c0c0c0;text-align:center;line-height:24px;color:#000;overflow:hidden;white-space:nowrap">搭接</div><div class="ss" style="position:absolute;left:904px;top:0;width:48px;height:19px;background:linear-gradient(#fdfdfd,#ececec);border-right:1px solid #c0c0c0;border-bottom:1px solid #c0c0c0;text-align:center;line-height:24px;color:#000;overflow:hidden;white-space:nowrap">损耗<b>(%)</b></div><div class="ss" style="position:absolute;left:953px;top:0;width:60px;height:19px;background:linear-gradient(#fdfdfd,#ececec);border-right:1px solid #c0c0c0;border-bottom:1px solid #c0c0c0;text-align:center;line-height:24px;color:#000;overflow:hidden;white-space:nowrap">单重<b>(kg)</b></div><div class="ss" style="position:absolute;left:1014px;top:0;width:60px;height:19px;background:linear-gradient(#fdfdfd,#ececec);border-right:1px solid #c0c0c0;border-bottom:1px solid #c0c0c0;text-align:center;line-height:24px;color:#000;overflow:hidden;white-space:nowrap">总重<b>(kg)</b></div><div class="ss" style="position:absolute;left:1075px;top:0;width:70px;height:19px;background:linear-gradient(#fdfdfd,#ececec);border-right:1px solid #c0c0c0;border-bottom:1px solid #c0c0c0;text-align:center;line-height:24px;color:#000;overflow:hidden;white-space:nowrap">钢筋归类</div><div class="ss" style="position:absolute;left:1146px;top:0;width:18px;height:19px;background:linear-gradient(#fdfdfd,#ececec);border-right:1px solid #c0c0c0;border-bottom:1px solid #c0c0c0;text-align:center;line-height:24px;color:#000;overflow:hidden;white-space:nowrap;text-align:left;text-indent:12px">搭</div><div class="ss" style="position:absolute;left:1px;top:20px;width:22px;height:60px;background:#ffd48a;border-right:1px solid #bdbdbd;border-bottom:1px solid #bdbdbd;text-align:left;line-height:64px;color:#800040;padding-left:11px;overflow:hidden;white-space:nowrap"><b>1*</b></div><div class="ss" style="position:absolute;left:35px;top:20px;width:70px;height:60px;background:#abe9d7;border-right:1px solid #bdbdbd;border-bottom:1px solid #bdbdbd;text-align:left;line-height:64px;color:#000;padding-left:2px;overflow:hidden;white-space:nowrap">横向钢筋<b>.1</b></div><div class="ss" style="position:absolute;left:108px;top:20px;width:53px;height:60px;background:#ccffd4;border-right:1px solid #bdbdbd;border-bottom:1px solid #bdbdbd;text-align:left;line-height:64px;color:#000;padding-left:2px;overflow:hidden;white-space:nowrap"><b>12</b></div><div class="ss" style="position:absolute;left:164px;top:20px;width:35px;height:60px;background:#ccffd4;border-right:1px solid #bdbdbd;border-bottom:1px solid #bdbdbd;text-align:center;line-height:64px;color:#000;padding-left:0px;overflow:hidden;white-space:nowrap"><svg width="10" height="12" viewBox="0 0 10 12" style="vertical-align:-2px"><ellipse cx="5" cy="6" rx="3.500" ry="2.600" fill="none" stroke="#000" stroke-width="1.100"/><path d="M5 1.500v9M2 10.500h6" stroke="#000" stroke-width="1.100"/></svg></div><div class="ss" style="position:absolute;left:200px;top:20px;width:30px;height:60px;background:#ccffd4;border-right:1px solid #bdbdbd;border-bottom:1px solid #bdbdbd;text-align:left;line-height:64px;color:#000;padding-left:2px;overflow:hidden;white-space:nowrap"><b>0</b></div><div class="ss" style="position:absolute;left:233px;top:20px;width:208px;height:60px;background:#ccffd4;border-right:1px solid #bdbdbd;border-bottom:1px solid #bdbdbd;text-align:left;line-height:64px;color:#000;padding-left:2px;overflow:hidden;white-space:nowrap"></div><div class="ss" style="position:absolute;left:444px;top:20px;width:162px;height:60px;background:#ccffd4;border-right:1px solid #bdbdbd;border-bottom:1px solid #bdbdbd;text-align:left;line-height:64px;color:#000;padding-left:2px;overflow:hidden;white-space:nowrap"><b>1127+500</b></div><div class="ss" style="position:absolute;left:609px;top:20px;width:154px;height:60px;background:#ccffd4;border-right:1px solid #bdbdbd;border-bottom:1px solid #bdbdbd;text-align:left;line-height:64px;color:#000;padding-left:2px;overflow:hidden;white-space:nowrap">净长<b>+</b>端头</div><div class="ss" style="position:absolute;left:766px;top:20px;width:58px;height:60px;background:#ccffd4;border-right:1px solid #bdbdbd;border-bottom:1px solid #bdbdbd;text-align:left;line-height:64px;color:#000;padding-left:2px;overflow:hidden;white-space:nowrap"><b>1627</b></div><div class="ss" style="position:absolute;left:827px;top:20px;width:35px;height:60px;background:#ccffd4;border-right:1px solid #bdbdbd;border-bottom:1px solid #bdbdbd;text-align:left;line-height:64px;color:#000;padding-left:2px;overflow:hidden;white-space:nowrap"><b>105</b></div><div class="ss" style="position:absolute;left:865px;top:20px;width:36px;height:60px;background:#ccffd4;border-right:1px solid #bdbdbd;border-bottom:1px solid #bdbdbd;text-align:left;line-height:64px;color:#000;padding-left:2px;overflow:hidden;white-space:nowrap"><b>0</b></div><div class="ss" style="position:absolute;left:904px;top:20px;width:46px;height:60px;background:#ccffd4;border-right:1px solid #bdbdbd;border-bottom:1px solid #bdbdbd;text-align:left;line-height:64px;color:#000;padding-left:2px;overflow:hidden;white-space:nowrap"><b>0</b></div><div class="ss" style="position:absolute;left:953px;top:20px;width:58px;height:60px;background:#ccffd4;border-right:1px solid #bdbdbd;border-bottom:1px solid #bdbdbd;text-align:left;line-height:64px;color:#000;padding-left:2px;overflow:hidden;white-space:nowrap"><b>1.445</b></div><div class="ss" style="position:absolute;left:1014px;top:20px;width:58px;height:60px;background:#ccffd4;border-right:1px solid #bdbdbd;border-bottom:1px solid #bdbdbd;text-align:left;line-height:64px;color:#000;padding-left:2px;overflow:hidden;white-space:nowrap"><b>151.701</b></div><div class="ss" style="position:absolute;left:1075px;top:20px;width:68px;height:60px;background:#ccffd4;border-right:1px solid #bdbdbd;border-bottom:1px solid #bdbdbd;text-align:left;line-height:64px;color:#000;padding-left:2px;overflow:hidden;white-space:nowrap">直筋</div><div class="ss" style="position:absolute;left:1146px;top:20px;width:16px;height:60px;background:#ccffd4;border-right:1px solid #bdbdbd;border-bottom:1px solid #bdbdbd;text-align:left;line-height:64px;color:#000;padding-left:2px;overflow:hidden;white-space:nowrap">绑扎</div><div class="ss" style="position:absolute;left:1px;top:81px;width:22px;height:28px;background:linear-gradient(#fff,#f4f4f4);border-right:1px solid #bdbdbd;border-bottom:1px solid #bdbdbd;text-align:left;line-height:32px;color:#000;padding-left:11px;overflow:hidden;white-space:nowrap"><b>2</b></div><div class="ss" style="position:absolute;left:35px;top:81px;width:70px;height:28px;background:#ccffd4;border-right:1px solid #bdbdbd;border-bottom:1px solid #bdbdbd;text-align:left;line-height:32px;color:#000;padding-left:2px;overflow:hidden;white-space:nowrap">水平纵筋<b>.1</b></div><div class="ss" style="position:absolute;left:108px;top:81px;width:53px;height:28px;background:#ccffd4;border-right:1px solid #bdbdbd;border-bottom:1px solid #bdbdbd;text-align:left;line-height:32px;color:#000;padding-left:2px;overflow:hidden;white-space:nowrap"><b>8</b></div><div class="ss" style="position:absolute;left:164px;top:81px;width:35px;height:28px;background:#ccffd4;border-right:1px solid #bdbdbd;border-bottom:1px solid #bdbdbd;text-align:center;line-height:32px;color:#000;padding-left:0px;overflow:hidden;white-space:nowrap"><svg width="10" height="12" viewBox="0 0 10 12" style="vertical-align:-2px"><ellipse cx="5" cy="6" rx="3.500" ry="2.600" fill="none" stroke="#000" stroke-width="1.100"/><path d="M5 1.500v9M2 10.500h6" stroke="#000" stroke-width="1.100"/></svg></div><div class="ss" style="position:absolute;left:200px;top:81px;width:30px;height:28px;background:#ccffd4;border-right:1px solid #bdbdbd;border-bottom:1px solid #bdbdbd;text-align:left;line-height:32px;color:#000;padding-left:2px;overflow:hidden;white-space:nowrap"><b>1</b></div><div class="ss" style="position:absolute;left:233px;top:81px;width:208px;height:28px;background:#ccffd4;border-right:1px solid #bdbdbd;border-bottom:1px solid #bdbdbd;text-align:left;line-height:32px;color:#000;padding-left:2px;overflow:hidden;white-space:nowrap"></div><div class="ss" style="position:absolute;left:444px;top:81px;width:162px;height:28px;background:#ccffd4;border-right:1px solid #bdbdbd;border-bottom:1px solid #bdbdbd;text-align:left;line-height:32px;color:#000;padding-left:2px;overflow:hidden;white-space:nowrap"><b>11634</b></div><div class="ss" style="position:absolute;left:609px;top:81px;width:154px;height:28px;background:#ccffd4;border-right:1px solid #bdbdbd;border-bottom:1px solid #bdbdbd;text-align:left;line-height:32px;color:#000;padding-left:2px;overflow:hidden;white-space:nowrap">净长</div><div class="ss" style="position:absolute;left:766px;top:81px;width:58px;height:28px;background:#ccffd4;border-right:1px solid #bdbdbd;border-bottom:1px solid #bdbdbd;text-align:left;line-height:32px;color:#000;padding-left:2px;overflow:hidden;white-space:nowrap"><b>11634</b></div><div class="ss" style="position:absolute;left:827px;top:81px;width:35px;height:28px;background:#ccffd4;border-right:1px solid #bdbdbd;border-bottom:1px solid #bdbdbd;text-align:left;line-height:32px;color:#000;padding-left:2px;overflow:hidden;white-space:nowrap"><b>1</b></div><div class="ss" style="position:absolute;left:865px;top:81px;width:36px;height:28px;background:#ccffd4;border-right:1px solid #bdbdbd;border-bottom:1px solid #bdbdbd;text-align:left;line-height:32px;color:#000;padding-left:2px;overflow:hidden;white-space:nowrap"><b>448</b></div><div class="ss" style="position:absolute;left:904px;top:81px;width:46px;height:28px;background:#ccffd4;border-right:1px solid #bdbdbd;border-bottom:1px solid #bdbdbd;text-align:left;line-height:32px;color:#000;padding-left:2px;overflow:hidden;white-space:nowrap"><b>0</b></div><div class="ss" style="position:absolute;left:953px;top:81px;width:58px;height:28px;background:#ccffd4;border-right:1px solid #bdbdbd;border-bottom:1px solid #bdbdbd;text-align:left;line-height:32px;color:#000;padding-left:2px;overflow:hidden;white-space:nowrap"><b>4.772</b></div><div class="ss" style="position:absolute;left:1014px;top:81px;width:58px;height:28px;background:#ccffd4;border-right:1px solid #bdbdbd;border-bottom:1px solid #bdbdbd;text-align:left;line-height:32px;color:#000;padding-left:2px;overflow:hidden;white-space:nowrap"><b>4.772</b></div><div class="ss" style="position:absolute;left:1075px;top:81px;width:68px;height:28px;background:#ccffd4;border-right:1px solid #bdbdbd;border-bottom:1px solid #bdbdbd;text-align:left;line-height:32px;color:#000;padding-left:2px;overflow:hidden;white-space:nowrap">直筋</div><div class="ss" style="position:absolute;left:1146px;top:81px;width:16px;height:28px;background:#ccffd4;border-right:1px solid #bdbdbd;border-bottom:1px solid #bdbdbd;text-align:left;line-height:32px;color:#000;padding-left:2px;overflow:hidden;white-space:nowrap">绑扎</div><div class="ss" style="position:absolute;left:1px;top:110px;width:22px;height:28px;background:linear-gradient(#fff,#f4f4f4);border-right:1px solid #bdbdbd;border-bottom:1px solid #bdbdbd;text-align:left;line-height:32px;color:#000;padding-left:11px;overflow:hidden;white-space:nowrap"><b>3</b></div><div class="ss" style="position:absolute;left:35px;top:110px;width:70px;height:28px;background:#ccffd4;border-right:1px solid #bdbdbd;border-bottom:1px solid #bdbdbd;text-align:left;line-height:32px;color:#000;padding-left:2px;overflow:hidden;white-space:nowrap">水平纵筋<b>.2</b></div><div class="ss" style="position:absolute;left:108px;top:110px;width:53px;height:28px;background:#ccffd4;border-right:1px solid #bdbdbd;border-bottom:1px solid #bdbdbd;text-align:left;line-height:32px;color:#000;padding-left:2px;overflow:hidden;white-space:nowrap"><b>8</b></div><div class="ss" style="position:absolute;left:164px;top:110px;width:35px;height:28px;background:#ccffd4;border-right:1px solid #bdbdbd;border-bottom:1px solid #bdbdbd;text-align:center;line-height:32px;color:#000;padding-left:0px;overflow:hidden;white-space:nowrap"><svg width="10" height="12" viewBox="0 0 10 12" style="vertical-align:-2px"><ellipse cx="5" cy="6" rx="3.500" ry="2.600" fill="none" stroke="#000" stroke-width="1.100"/><path d="M5 1.500v9M2 10.500h6" stroke="#000" stroke-width="1.100"/></svg></div><div class="ss" style="position:absolute;left:200px;top:110px;width:30px;height:28px;background:#ccffd4;border-right:1px solid #bdbdbd;border-bottom:1px solid #bdbdbd;text-align:left;line-height:32px;color:#000;padding-left:2px;overflow:hidden;white-space:nowrap"><b>1</b></div><div class="ss" style="position:absolute;left:233px;top:110px;width:208px;height:28px;background:#ccffd4;border-right:1px solid #bdbdbd;border-bottom:1px solid #bdbdbd;text-align:left;line-height:32px;color:#000;padding-left:2px;overflow:hidden;white-space:nowrap"></div><div class="ss" style="position:absolute;left:444px;top:110px;width:162px;height:28px;background:#ccffd4;border-right:1px solid #bdbdbd;border-bottom:1px solid #bdbdbd;text-align:left;line-height:32px;color:#000;padding-left:2px;overflow:hidden;white-space:nowrap"><b>11187</b></div><div class="ss" style="position:absolute;left:609px;top:110px;width:154px;height:28px;background:#ccffd4;border-right:1px solid #bdbdbd;border-bottom:1px solid #bdbdbd;text-align:left;line-height:32px;color:#000;padding-left:2px;overflow:hidden;white-space:nowrap">净长</div><div class="ss" style="position:absolute;left:766px;top:110px;width:58px;height:28px;background:#ccffd4;border-right:1px solid #bdbdbd;border-bottom:1px solid #bdbdbd;text-align:left;line-height:32px;color:#000;padding-left:2px;overflow:hidden;white-space:nowrap"><b>11187</b></div><div class="ss" style="position:absolute;left:827px;top:110px;width:35px;height:28px;background:#ccffd4;border-right:1px solid #bdbdbd;border-bottom:1px solid #bdbdbd;text-align:left;line-height:32px;color:#000;padding-left:2px;overflow:hidden;white-space:nowrap"><b>1</b></div><div class="ss" style="position:absolute;left:865px;top:110px;width:36px;height:28px;background:#ccffd4;border-right:1px solid #bdbdbd;border-bottom:1px solid #bdbdbd;text-align:left;line-height:32px;color:#000;padding-left:2px;overflow:hidden;white-space:nowrap"><b>448</b></div><div class="ss" style="position:absolute;left:904px;top:110px;width:46px;height:28px;background:#ccffd4;border-right:1px solid #bdbdbd;border-bottom:1px solid #bdbdbd;text-align:left;line-height:32px;color:#000;padding-left:2px;overflow:hidden;white-space:nowrap"><b>0</b></div><div class="ss" style="position:absolute;left:953px;top:110px;width:58px;height:28px;background:#ccffd4;border-right:1px solid #bdbdbd;border-bottom:1px solid #bdbdbd;text-align:left;line-height:32px;color:#000;padding-left:2px;overflow:hidden;white-space:nowrap"><b>4.596</b></div><div class="ss" style="position:absolute;left:1014px;top:110px;width:58px;height:28px;background:#ccffd4;border-right:1px solid #bdbdbd;border-bottom:1px solid #bdbdbd;text-align:left;line-height:32px;color:#000;padding-left:2px;overflow:hidden;white-space:nowrap"><b>4.596</b></div><div class="ss" style="position:absolute;left:1075px;top:110px;width:68px;height:28px;background:#ccffd4;border-right:1px solid #bdbdbd;border-bottom:1px solid #bdbdbd;text-align:left;line-height:32px;color:#000;padding-left:2px;overflow:hidden;white-space:nowrap">直筋</div><div class="ss" style="position:absolute;left:1146px;top:110px;width:16px;height:28px;background:#ccffd4;border-right:1px solid #bdbdbd;border-bottom:1px solid #bdbdbd;text-align:left;line-height:32px;color:#000;padding-left:2px;overflow:hidden;white-space:nowrap">绑扎</div><div class="ss" style="position:absolute;left:1px;top:139px;width:22px;height:28px;background:linear-gradient(#fff,#f4f4f4);border-right:1px solid #bdbdbd;border-bottom:1px solid #bdbdbd;text-align:left;line-height:32px;color:#000;padding-left:11px;overflow:hidden;white-space:nowrap"><b>4</b></div><div class="ss" style="position:absolute;left:35px;top:139px;width:70px;height:28px;background:#ccffd4;border-right:1px solid #bdbdbd;border-bottom:1px solid #bdbdbd;text-align:left;line-height:32px;color:#000;padding-left:2px;overflow:hidden;white-space:nowrap">水平纵筋<b>.3</b></div><div class="ss" style="position:absolute;left:108px;top:139px;width:53px;height:28px;background:#ccffd4;border-right:1px solid #bdbdbd;border-bottom:1px solid #bdbdbd;text-align:left;line-height:32px;color:#000;padding-left:2px;overflow:hidden;white-space:nowrap"><b>8</b></div><div class="ss" style="position:absolute;left:164px;top:139px;width:35px;height:28px;background:#ccffd4;border-right:1px solid #bdbdbd;border-bottom:1px solid #bdbdbd;text-align:center;line-height:32px;color:#000;padding-left:0px;overflow:hidden;white-space:nowrap"><svg width="10" height="12" viewBox="0 0 10 12" style="vertical-align:-2px"><ellipse cx="5" cy="6" rx="3.500" ry="2.600" fill="none" stroke="#000" stroke-width="1.100"/><path d="M5 1.500v9M2 10.500h6" stroke="#000" stroke-width="1.100"/></svg></div><div class="ss" style="position:absolute;left:200px;top:139px;width:30px;height:28px;background:#ccffd4;border-right:1px solid #bdbdbd;border-bottom:1px solid #bdbdbd;text-align:left;line-height:32px;color:#000;padding-left:2px;overflow:hidden;white-space:nowrap"><b>1</b></div><div class="ss" style="position:absolute;left:233px;top:139px;width:208px;height:28px;background:#ccffd4;border-right:1px solid #bdbdbd;border-bottom:1px solid #bdbdbd;text-align:left;line-height:32px;color:#000;padding-left:2px;overflow:hidden;white-space:nowrap"></div><div class="ss" style="position:absolute;left:444px;top:139px;width:162px;height:28px;background:#ccffd4;border-right:1px solid #bdbdbd;border-bottom:1px solid #bdbdbd;text-align:left;line-height:32px;color:#000;padding-left:2px;overflow:hidden;white-space:nowrap"><b>10741</b></div><div class="ss" style="position:absolute;left:609px;top:139px;width:154px;height:28px;background:#ccffd4;border-right:1px solid #bdbdbd;border-bottom:1px solid #bdbdbd;text-align:left;line-height:32px;color:#000;padding-left:2px;overflow:hidden;white-space:nowrap">净长</div><div class="ss" style="position:absolute;left:766px;top:139px;width:58px;height:28px;background:#ccffd4;border-right:1px solid #bdbdbd;border-bottom:1px solid #bdbdbd;text-align:left;line-height:32px;color:#000;padding-left:2px;overflow:hidden;white-space:nowrap"><b>10741</b></div><div class="ss" style="position:absolute;left:827px;top:139px;width:35px;height:28px;background:#ccffd4;border-right:1px solid #bdbdbd;border-bottom:1px solid #bdbdbd;text-align:left;line-height:32px;color:#000;padding-left:2px;overflow:hidden;white-space:nowrap"><b>1</b></div><div class="ss" style="position:absolute;left:865px;top:139px;width:36px;height:28px;background:#ccffd4;border-right:1px solid #bdbdbd;border-bottom:1px solid #bdbdbd;text-align:left;line-height:32px;color:#000;padding-left:2px;overflow:hidden;white-space:nowrap"><b>448</b></div><div class="ss" style="position:absolute;left:904px;top:139px;width:46px;height:28px;background:#ccffd4;border-right:1px solid #bdbdbd;border-bottom:1px solid #bdbdbd;text-align:left;line-height:32px;color:#000;padding-left:2px;overflow:hidden;white-space:nowrap"><b>0</b></div><div class="ss" style="position:absolute;left:953px;top:139px;width:58px;height:28px;background:#ccffd4;border-right:1px solid #bdbdbd;border-bottom:1px solid #bdbdbd;text-align:left;line-height:32px;color:#000;padding-left:2px;overflow:hidden;white-space:nowrap"><b>4.42</b></div><div class="ss" style="position:absolute;left:1014px;top:139px;width:58px;height:28px;background:#ccffd4;border-right:1px solid #bdbdbd;border-bottom:1px solid #bdbdbd;text-align:left;line-height:32px;color:#000;padding-left:2px;overflow:hidden;white-space:nowrap"><b>4.42</b></div><div class="ss" style="position:absolute;left:1075px;top:139px;width:68px;height:28px;background:#ccffd4;border-right:1px solid #bdbdbd;border-bottom:1px solid #bdbdbd;text-align:left;line-height:32px;color:#000;padding-left:2px;overflow:hidden;white-space:nowrap">直筋</div><div class="ss" style="position:absolute;left:1146px;top:139px;width:16px;height:28px;background:#ccffd4;border-right:1px solid #bdbdbd;border-bottom:1px solid #bdbdbd;text-align:left;line-height:32px;color:#000;padding-left:2px;overflow:hidden;white-space:nowrap">绑扎</div><div style="position:absolute;left:107px;top:20px;width:2px;height:140px;background:#000"></div><svg style="position:absolute;left:233px;top:21px" width="211" height="140" viewBox="0 0 211 140"><path d="M55 55V8h99.500" fill="none" stroke="#000" stroke-width="1.900"/><text x="0" y="0" font-size="11" font-family="Liberation Sans,sans-serif" transform="translate(40.600 10.500) rotate(90)">500</text><text x="150" y="14" font-size="10" font-family="Liberation Sans,sans-serif">1053</text><text x="0" y="0" font-size="10" font-family="Liberation Sans,sans-serif" transform="translate(170 8) rotate(-90)">63</text><path d="M25 79h157M25 108h157M25 137h157" stroke="#000" stroke-width="1.900"/><text x="109.700" y="76" font-size="10.800" fill="#f00" text-anchor="middle" font-family="Liberation Sans,sans-serif">11634</text><text x="109.700" y="105" font-size="10.800" fill="#f00" text-anchor="middle" font-family="Liberation Sans,sans-serif">11187</text><text x="109.700" y="134" font-size="10.800" fill="#f00" text-anchor="middle" font-family="Liberation Sans,sans-serif">10741</text></svg></div>
<div class="" style="position:absolute;left:1347px;top:534px;width:16px;height:154px;background:#f0f0f0"></div>
<div class="" style="position:absolute;left:1347px;top:551px;width:16px;height:25px;background:#cdcdcd"></div>
<svg class="i" style="left:1347px;top:534px" width="16" height="154" viewBox="0 0 16 154"><path d="M4.500 11l3.500-3.500 3.500 3.500M4.500 143l3.500 3.500 3.500-3.500" fill="none" stroke="#505050" stroke-width="1.600"/></svg>
<div class="" style="position:absolute;left:183px;top:687px;width:1180px;height:17px;background:#f0f0f0"></div>
<div class="" style="position:absolute;left:201px;top:688px;width:811px;height:15px;background:#cdcdcd"></div>
<svg class="i" style="left:182px;top:687px" width="1165" height="16" viewBox="0 0 1165 16"><path d="M11.500 4.500l-3.500 3.500 3.500 3.500M1152.500 4.500l3.500 3.500-3.500 3.500" fill="none" stroke="#505050" stroke-width="1.600"/></svg>
<div class="" style="position:absolute;left:0px;top:706px;width:1366px;height:22px;background:#fafafa;border-top:1px solid #e4e4e4;box-sizing:border-box"></div>
<div class="" style="position:absolute;left:0px;top:708px;width:148px;height:19px;background:#f3f3f3;border:1px solid #e2e2e2;box-sizing:border-box"></div>
<div class="" style="position:absolute;left:150px;top:708px;width:77px;height:19px;background:#f3f3f3;border:1px solid #e2e2e2;box-sizing:border-box"></div>
<div class="" style="position:absolute;left:230px;top:708px;width:98px;height:19px;background:#f3f3f3;border:1px solid #e2e2e2;box-sizing:border-box"></div>
<div class="" style="position:absolute;left:330px;top:708px;width:48px;height:19px;background:#f3f3f3;border:1px solid #e2e2e2;box-sizing:border-box"></div>
<div class="" style="position:absolute;left:381px;top:708px;width:911px;height:19px;background:#f3f3f3;border:1px solid #e2e2e2;box-sizing:border-box"></div>
<div class="" style="position:absolute;left:1294px;top:708px;width:72px;height:19px;background:#f3f3f3;border:1px solid #e2e2e2;box-sizing:border-box"></div>
<span class="t ss" style="left:2px;top:711px;line-height:16px;"><b>X=286445 Y=19822</b></span>
<span class="t ss" style="left:152px;top:711px;line-height:16px;">层高<b>:4.5m</b></span>
<span class="t ss" style="left:232px;top:711px;line-height:16px;">底标高<b>:4.45m</b></span>
<span class="t ss" style="left:332px;top:711px;line-height:16px;"><b>1(2)</b></span>
<span class="t ss" style="left:1298px;top:711px;line-height:16px;"><b>48 FPS</b></span>
<div class="" style="position:absolute;left:0px;top:728px;width:1366px;height:40px;background:#0b161c"></div>
<div class="" style="position:absolute;left:0px;top:728px;width:48px;height:40px;background:#0a0c0e"></div>
<svg class="i" style="left:16px;top:740px" width="17" height="17" viewBox="0 0 17 17"><path d="M0 2.300l7-1v6.700H0zM8 1.200L17 0v8H8zM0 9h7v6.700l-7-1zM8 9h9v8l-9-1.200z" fill="#fff"/></svg>
<div class="" style="position:absolute;left:48px;top:728px;width:344px;height:40px;background:#f2f2f2"></div>
<svg class="i" style="left:57px;top:737px" width="22" height="22" viewBox="0 0 22 22"><circle cx="11" cy="11" r="8.500" fill="none" stroke="#1a1a1a" stroke-width="2.600"/></svg>
<span class="t" style="left:88px;top:739px;line-height:18px;font-size:14px;color:#555">在这里输入你要搜索的内容</span>
<svg class="i" style="left:363px;top:739px" width="14" height="20" viewBox="0 0 14 20"><rect x="4.500" y="1.500" width="5" height="10" rx="2.500" fill="none" stroke="#444" stroke-width="1.300"/><path d="M2 9.500a5 5 0 0 0 10 0M7 14.500v3.500M4 18h6" fill="none" stroke="#444" stroke-width="1.300"/></svg>
<svg class="i" style="left:406px;top:739px" width="20" height="18" viewBox="0 0 20 18"><path d="M2 1h11M2 17h11M2 1v2M13 1v2M2 17v-2M13 17v-2" stroke="#fff" stroke-width="1.400" fill="none"/><rect x="3" y="5" width="9" height="7" fill="none" stroke="#fff" stroke-width="1.400"/><path d="M16.500 3v3M16.500 8v6" stroke="#fff" stroke-width="1.600"/></svg>
<svg class="i" style="left:455px;top:737px" width="24" height="24" viewBox="0 0 24 24"><g fill="#e8e8e8"><path d="M12 12C7 10 4 5 8 2s7 3 4 10z"/><path d="M12 12c2-5 7-8 10-4s-3 7-10 4z"/><path d="M12 12c5 2 8 7 4 10s-7-3-4-10z"/><path d="M12 12c-2 5-7 8-10 4s3-7 10-4z"/></g></svg>
<svg class="i" style="left:507px;top:737px" width="24" height="24" viewBox="0 0 24 24"><path d="M4 13a8 8 0 0 1 16-1H8.500a3.500 3.500 0 0 0 7 1.500H20A8.200 8.200 0 0 1 4 13zM8.500 10h7a3.500 3.500 0 0 0-7 0z" fill="#f0f0f0" fill-rule="evenodd"/><path d="M2 21c-2-5 6-14 14-17 4-1.500 6 0 4.500 3.500" fill="none" stroke="#f0f0f0" stroke-width="1.600"/></svg>
<svg class="i" style="left:556px;top:733px" width="30" height="28" viewBox="0 0 30 28"><path d="M12 8a8 8 0 1 0 8 9M12 11a5 5 0 1 0 5 6M12 14a2.500 2.500 0 1 0 2.500 3" fill="none" stroke="#ddd" stroke-width="1.400"/><path d="M22 2c3 0 4 2.500 4 5 0 2 1 3 1.500 4h-11c.500-1 1.500-2 1.500-4 0-2.500 1-5 4-5z" fill="#f0a818"/><circle cx="22" cy="12" r="1.500" fill="#f0a818"/></svg>
<svg class="i" style="left:606px;top:737px" width="24" height="24" viewBox="0 0 24 24"><path d="M2 11C3 5 8 2 12.500 2c6 0 9.500 4.500 9.500 10v2H9c0 3 3 4.500 6 4.500 2.500 0 4.500-.800 6-1.800v4.500c-2 1-4 1.500-7 1.500-6 0-10-4-10-9 0-3 1.500-6 5-7.500C7 7 6.500 8.500 6.500 10H16c0-3-2-4.500-4.500-4.500C7.500 5.500 4 8 2 11z" fill="#1f7fe0"/></svg>
<svg class="i" style="left:652px;top:736px" width="28" height="26" viewBox="0 0 28 26"><path d="M5 14a9 9 0 0 1 18-1H10a4 4 0 0 0 8 1.800h5A9.200 9.200 0 0 1 5 14zM10 11h8a4 4 0 0 0-8 0z" fill="#2f9be8" fill-rule="evenodd"/><path d="M3 24c-3-6 6-15 15-19 5-2 8 0 6 4" fill="none" stroke="#f0c020" stroke-width="1.800"/></svg>
<svg class="i" style="left:698px;top:737px" width="26" height="24" viewBox="0 0 26 24"><path d="M1 3h8l2 2h13v15H1z" fill="#f2c14a"/><path d="M1 7h23v13H1z" fill="#fbd96a"/><path d="M7 13h11v7H7z" fill="#3a9be8"/><path d="M10 16h5v4h-5z" fill="#fbd96a"/></svg>
<svg class="i" style="left:742px;top:735px" width="28" height="28" viewBox="0 0 28 28"><circle cx="14" cy="14" r="11.500" fill="#4cc83a" stroke="#b8f0a8" stroke-width="1.600"/><path d="M7 15a7 7 0 0 1 14-1H11a3 3 0 0 0 6 1h4A7.200 7.200 0 0 1 7 15zM11 12h6a3 3 0 0 0-6 0z" fill="#fff" fill-rule="evenodd"/><path d="M2 22C6 12 18 4 26 5" fill="none" stroke="#d8f8d0" stroke-width="1.200"/></svg>
<div class="" style="position:absolute;left:733px;top:765px;width:64px;height:3px;background:#76b9ed"></div>
<div class="" style="position:absolute;left:790px;top:765px;width:7px;height:3px;background:#3c6c94"></div>
<svg class="i" style="left:788px;top:740px" width="26" height="18" viewBox="0 0 26 18"><path d="M1 6L13 0l12 6v12H1z" fill="#fff"/><path d="M1 6l12 6 12-6" fill="none" stroke="#0b161c" stroke-width="1.600"/><path d="M1 18l8-7.500" stroke="#0b161c" stroke-width="1.200"/></svg>
<div class="" style="position:absolute;left:822px;top:728px;width:48px;height:40px;background:#121f26"></div>
<div class="" style="position:absolute;left:822px;top:765px;width:48px;height:3px;background:#76b9ed"></div>
<svg class="i" style="left:834px;top:736px" width="24" height="24" viewBox="0 0 24 24"><rect width="24" height="24" rx="4.500" fill="#1b8ff0"/><path d="M12 4v16M6.500 9.500c0-3.500 4-3.500 5.500-.800M17.500 14.500c0 3.500-4 3.500-5.500 .800M4 13h16" fill="none" stroke="#fff" stroke-width="2"/></svg>
<div class="" style="position:absolute;left:874px;top:765px;width:38px;height:3px;background:#76b9ed"></div>
<svg class="i" style="left:878px;top:735px" width="28" height="28" viewBox="0 0 28 28"><path d="M22 6C14 0 3 5 3 15c0 8 9 12 16 8 4-2.500 5-6 4-9l-9 1c2 1.500 3 3 1.500 5-2.500 2-7.500 0-7.500-5 0-6 6-9 11-6z" fill="#2a90f0"/><path d="M21 2l3 5-6 .500z" fill="#2a90f0"/></svg>
<span class="t" style="left:925px;top:740px;line-height:16px;color:#e6e6e6;font-size:12px">链接</span>
<svg class="i" style="left:972px;top:738px" width="20" height="20" viewBox="0 0 20 20"><circle cx="6.500" cy="9" r="3" fill="none" stroke="#fff" stroke-width="1.300"/><path d="M1 18c.500-4 3-5 5.500-5s5 1 5.500 5" fill="none" stroke="#fff" stroke-width="1.300"/><circle cx="14" cy="5" r="2.400" fill="none" stroke="#fff" stroke-width="1.300"/><path d="M12.500 9.500c3-.500 5 1 5.500 4" fill="none" stroke="#fff" stroke-width="1.300"/></svg>
<svg class="i" style="left:1011px;top:743px" width="14" height="9" viewBox="0 0 14 9"><path d="M1 8l6-6.500L13 8" fill="none" stroke="#fff" stroke-width="1.400"/></svg>
<svg class="i" style="left:1058px;top:740px" width="16" height="17" viewBox="0 0 16 17"><path d="M8 1c3 0 4.500 2.500 4.500 5.500 0 2.500 1 3.500 2 5H1.500c1-1.500 2-2.500 2-5C3.500 3.500 5 1 8 1z" fill="#fff"/><path d="M6 14.500h4" stroke="#fff" stroke-width="1.600"/></svg>
<svg class="i" style="left:1081px;top:741px" width="22" height="15" viewBox="0 0 22 15"><rect x="6.500" y="4.500" width="13" height="8" fill="none" stroke="#fff" stroke-width="1.200"/><rect x="8" y="6" width="8" height="5" fill="#fff"/><path d="M20 7v3" stroke="#fff" stroke-width="1.600"/><path d="M2 1v3M5 1v3M.500 4h6v2.500a3 3 0 0 1-6 0zM3.500 9v4" stroke="#fff" stroke-width="1.100" fill="none"/></svg>
<svg class="i" style="left:1107px;top:741px" width="18" height="16" viewBox="0 0 18 16"><path d="M1 15A14 14 0 0 1 15 1M4.500 15A10.500 10.500 0 0 1 15 4.500M8 15a7 7 0 0 1 7-7" fill="none" stroke="#ddd" stroke-width="1.400"/><circle cx="13" cy="13.500" r="2" fill="#ddd"/></svg>
<svg class="i" style="left:1129px;top:740px" width="20" height="17" viewBox="0 0 20 17"><path d="M1 6h3.500l4-4v13l-4-4H1z" fill="none" stroke="#fff" stroke-width="1.200"/><path d="M11 5.500a4 4 0 0 1 0 6M13.500 3.500a7 7 0 0 1 0 10" fill="none" stroke="#fff" stroke-width="1.100"/><path d="M16 1.500a10 10 0 0 1 0 14" fill="none" stroke="#888" stroke-width="1"/></svg>
<svg class="i" style="left:1154px;top:741px" width="24" height="15" viewBox="0 0 24 15"><rect x=".700" y=".700" width="22.600" height="13.600" rx="1.500" fill="none" stroke="#fff" stroke-width="1.300"/><path d="M3.500 4.500h17M3.500 7.500h17" stroke="#fff" stroke-width="1.500" stroke-dasharray="1.500 1.500"/><path d="M6 11h12" stroke="#fff" stroke-width="1.500"/></svg>
<span class="t" style="left:1186px;top:739px;line-height:18px;color:#fff;font-size:14px">中</span>
<svg class="i" style="left:1212px;top:739px" width="19" height="18" viewBox="0 0 19 18"><path d="M3 1.500l14-1.500 1.500 14L4 17 .500 4z" fill="#f04a1a"/><path d="M13.500 5C11 3.500 6 4 6 6.500c0 2.500 7 1.500 7 4.500 0 2.500-5 3-8 1.200" fill="none" stroke="#fff" stroke-width="2"/></svg>
<span class="t" style="left:1261px;top:731px;line-height:16px;color:#fff;font-size:12.500px">15:55</span>
<span class="t" style="left:1247px;top:750px;line-height:16px;color:#fff;font-size:12.500px;letter-spacing:.400px">2018/9/20</span>
<svg class="i" style="left:1324px;top:740px" width="26" height="22" viewBox="0 0 26 22"><path d="M1 1h16v12H8l-3.500 3.500V13H1z" fill="#fff"/><path d="M4 4.500h10M4 7.500h10M4 10.500h6" stroke="#0b161c" stroke-width="1.100"/><circle cx="17.500" cy="14" r="6.500" fill="#3a3a3a" stroke="#bbb" stroke-width="1"/><text x="17.500" y="18" font-size="10.500" font-weight="bold" fill="#fff" text-anchor="middle" font-family="Liberation Sans,sans-serif">2</text></svg>

</body></html>
